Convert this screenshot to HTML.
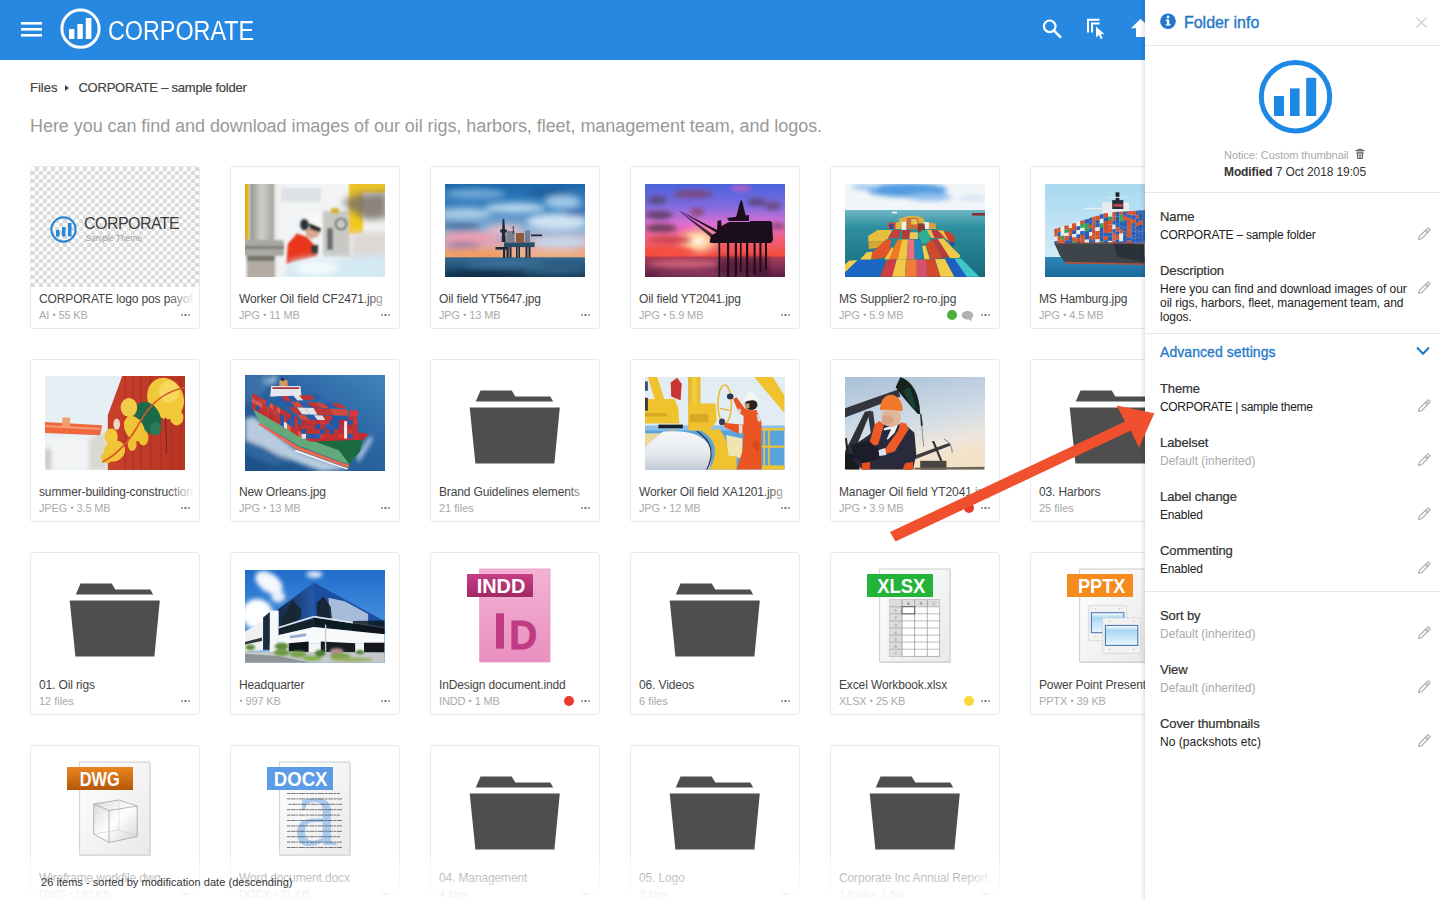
<!DOCTYPE html>
<html lang="en">
<head>
<meta charset="utf-8">
<title>CORPORATE – sample folder</title>
<style>
*{box-sizing:border-box;margin:0;padding:0}
html,body{width:1440px;height:900px;overflow:hidden;background:#fff}
body{font-family:"Liberation Sans",sans-serif;color:#333;position:relative;-webkit-font-smoothing:antialiased}
.abs{position:absolute}
#hdr{position:absolute;left:0;top:0;width:1440px;height:59.5px;background:#2688e0}
#brand{position:absolute;left:108px;top:14.5px;font-size:27px;line-height:32px;color:#fff;letter-spacing:0;white-space:nowrap;transform-origin:0 50%;transform:scaleX(0.864)}
#crumb{position:absolute;left:30px;top:80px;font-size:13px;line-height:16px;color:#444;-webkit-text-stroke:0.2px #444;white-space:nowrap}
#crumb .sep{display:inline-block;width:0;height:0;border-left:4px solid #444;border-top:3px solid transparent;border-bottom:3px solid transparent;margin:0 9px 2px 8px;vertical-align:middle}
#desc{position:absolute;left:30px;top:114px;font-size:18px;line-height:24px;color:#9a9a9a;white-space:nowrap;letter-spacing:-0.055px}
.card{position:absolute;width:170px;height:163px;border:1px solid #e9e9e9;border-radius:3px;background:#fff;overflow:hidden}
.card .th{position:absolute;left:14px;top:17px;width:140px;height:93px;overflow:hidden}
.card .th svg{display:block}
.card .ti{position:absolute;left:8px;top:124px;width:158px;font-size:12px;line-height:16px;color:#444;white-space:nowrap;overflow:hidden;letter-spacing:-0.13px}
.card .ti i{font-style:normal;color:#999}
.card .ti:after{content:"";position:absolute;right:0;top:0;width:30px;height:16px;background:linear-gradient(90deg,rgba(255,255,255,0),#fff 92%)}
.card .me{position:absolute;left:8px;top:141px;font-size:11px;line-height:14px;color:#aaa;white-space:nowrap;letter-spacing:-0.15px}
.card .me .bu{font-size:8.5px;vertical-align:1px;margin:0 .4px}
.card .dots{position:absolute;left:150px;top:147px;width:10px;height:3px}
.card .dots b{position:absolute;top:0;width:2.4px;height:2.4px;border-radius:50%;background:#8a8a8a}
.card .lab{position:absolute;top:143px;width:10px;height:10px;border-radius:50%}
#panel{position:absolute;left:1145px;top:0;width:295px;height:900px;background:#fff;box-shadow:-1px 0 5px rgba(0,0,0,0.16)}
#panel .hl{position:absolute;left:0;width:295px;height:1px;background:#e8e8e8}
#panel .lb{position:absolute;left:15px;font-size:13px;line-height:16px;color:#333;-webkit-text-stroke:0.22px #333;white-space:nowrap;letter-spacing:-0.1px}
#panel .vl{position:absolute;left:15px;font-size:12px;line-height:14px;color:#222;white-space:nowrap;letter-spacing:-0.2px}
#panel .vl.g{color:#aaa}
#panel .pen{position:absolute;left:272px;width:14px;height:14px}
#fade{position:absolute;left:0;top:852px;width:1145px;height:48px;background:linear-gradient(180deg,rgba(255,255,255,0),rgba(255,255,255,0.56) 35%,rgba(255,255,255,0.72) 65%,rgba(255,255,255,0.9))}
#status{position:absolute;left:41px;top:875px;font-size:11px;line-height:14px;color:#333;white-space:nowrap;letter-spacing:0.04px}
</style>
</head>
<body>
<div id="hdr">
  <svg class="abs" style="left:20px;top:21px" width="23" height="17" viewBox="0 0 23 17"><rect x="1" y="1" width="21" height="2.6" fill="#fff"/><rect x="1" y="7" width="21" height="2.6" fill="#fff"/><rect x="1" y="13" width="21" height="2.6" fill="#fff"/></svg>
  <svg class="abs" style="left:59px;top:7px" width="44" height="44" viewBox="0 0 44 44"><circle cx="21.5" cy="21.7" r="18.6" fill="none" stroke="#fff" stroke-width="3"/><rect x="10" y="22" width="5.4" height="10" fill="#fff"/><rect x="18.4" y="17" width="5.4" height="15" fill="#fff"/><rect x="26.8" y="11" width="5.6" height="21" fill="#fff"/></svg>
  <div id="brand">CORPORATE</div>
  <svg class="abs" style="left:1038px;top:15px" width="28" height="28" viewBox="0 0 28 28"><circle cx="11.7" cy="11.3" r="5.8" fill="none" stroke="#fff" stroke-width="2.2"/><path d="M16 15.6 L22.2 21.8" stroke="#fff" stroke-width="2.6" stroke-linecap="round"/></svg>
  <svg class="abs" style="left:1084px;top:15px" width="26" height="28" viewBox="0 0 26 28"><path d="M4 17.5 V4.8 H15.5" fill="none" stroke="#fff" stroke-width="2"/><path d="M8 17.5 V8.6 H15.5" fill="none" stroke="#fff" stroke-width="2"/><path d="M12 11.5 L12 22.5 L14.8 20 L16.8 24 L18.6 23.1 L16.7 19.2 L20.3 19 Z" fill="#fff"/></svg>
  <svg class="abs" style="left:1128px;top:15px" width="34" height="28" viewBox="0 0 34 28"><path d="M12.6 3.7 L3 13.2 H8 V22 H17.2 V13.2 H22.2 Z" fill="#fff"/></svg>
</div>
<div id="crumb">Files<span class="sep"></span><span style="letter-spacing:-0.23px">CORPORATE – sample folder</span></div>
<div id="desc">Here you can find and download images of our oil rigs, harbors, fleet, management team, and logos.</div>
<div id="cards">
<div class="card" style="left:30px;top:166px"><div class="abs" style="left:0;top:0;width:168px;height:120px;background-color:#fff;background-image:linear-gradient(45deg,#d9d9d9 25%,transparent 25%,transparent 75%,#d9d9d9 75%),linear-gradient(45deg,#d9d9d9 25%,transparent 25%,transparent 75%,#d9d9d9 75%);background-size:8px 8px;background-position:0 0,4px 4px"></div>
<svg class="abs" style="left:17px;top:47px" width="32" height="32" viewBox="0 0 32 32"><circle cx="15.5" cy="15.5" r="12.1" fill="none" stroke="#2a88d8" stroke-width="2.2"/><rect x="8" y="16" width="3.5" height="6.5" fill="#2a88d8"/><rect x="14" y="13" width="3.5" height="9.5" fill="#2a88d8"/><rect x="20" y="9" width="3.5" height="13.5" fill="#2a88d8"/></svg>
<div class="abs" style="left:53px;top:48px;font-size:16px;line-height:18px;color:#3a3a3a;letter-spacing:-0.55px;white-space:nowrap">CORPORATE</div>
<div class="abs" style="left:54.5px;top:66px;font-size:8.5px;line-height:10px;color:#a4a4a4;white-space:nowrap;letter-spacing:-0.1px">Sample Theme</div><div class="ti">CORPORATE logo pos payoff.ai</div><div class="me">AI <span class="bu">•</span> 55 KB</div><div class="dots"><b style="left:0"></b><b style="left:3.4px"></b><b style="left:6.8px"></b></div></div>
<div class="card" style="left:230px;top:166px"><div class="th" style="top:17px;height:93px"><svg width="140" height="93" viewBox="0 0 140 93"><defs><filter id="b1" x="-10%" y="-10%" width="120%" height="120%"><feGaussianBlur stdDeviation="1.1"/></filter><filter id="b1b" x="-20%" y="-20%" width="140%" height="140%"><feGaussianBlur stdDeviation="3.5"/></filter><linearGradient id="w1p" x1="0" x2="1"><stop offset="0" stop-color="#8f8f8c"/><stop offset=".45" stop-color="#cfcfcc"/><stop offset="1" stop-color="#a3a29e"/></linearGradient></defs>
<rect width="140" height="93" fill="#f1f3f4"/>
<g filter="url(#b1)">
<rect x="36" y="4" width="40" height="14" fill="#dfe3e6"/>
<rect x="-2" y="-2" width="6" height="58" fill="#dcae1c"/>
<rect x="5" y="-2" width="24.5" height="97" fill="url(#w1p)"/>
<rect x="29.5" y="-2" width="3" height="97" fill="#e9e9e6"/>
<rect x="-2" y="56" width="41" height="16" rx="3" fill="#a9a8a3"/>
<rect x="-2" y="62" width="41" height="3" fill="#7f7e7a"/>
<rect x="2" y="72" width="28" height="23" fill="#b3aca4"/>
<rect x="2" y="72" width="28" height="5" fill="#75726c"/>
<rect x="78" y="27" width="27" height="46" fill="#c9c9c4"/>
<rect x="82" y="44" width="6" height="22" fill="#6d6f70"/>
<circle cx="96" cy="40" r="5.5" fill="none" stroke="#55585a" stroke-width="1.6"/>
<rect x="86" y="24" width="8" height="6" fill="#d8b63a"/>
<rect x="104" y="-2" width="14" height="52" fill="#f2c81c"/>
<rect x="104" y="-2" width="38" height="11" fill="#ecc325"/>
<path d="M41.5 80 L42.8 60 L52 49.5 L62 53 L70.5 62.5 L72 72 Z" fill="#e8361b"/>
<path d="M61 44 L73 44 L74 52 L66 55 L61 52Z" fill="#d9a78c"/>
<path d="M56 41 Q57 27 68 28 Q76 31 77 43 L70 40 L62 37 Z" fill="#f7f7f5"/>
<ellipse cx="59.5" cy="40.5" rx="4.3" ry="6" fill="#2c3340"/>
<path d="M64 39 L76 44 L75 48.5 L65 45 Z" fill="#25272c"/>
<rect x="66" y="61" width="7" height="9" fill="#3a3530"/>
</g>
<g filter="url(#b1b)">
<path d="M97 18 L112 10 L142 8 L142 34 L122 36 L108 28 Z" fill="#7a7068" opacity=".85"/>
<rect x="106" y="48" width="40" height="50" fill="#dcd8d4"/>
<path d="M38 98 L44 78 Q70 70 104 74 L140 70 L146 98 Z" fill="#d3e9f4"/>
<ellipse cx="72" cy="84" rx="22" ry="7" fill="#f4fafd"/>
</g></svg></div><div class="ti">Worker Oil field CF2471.jpg</div><div class="me">JPG <span class="bu">•</span> 11 MB</div><div class="dots"><b style="left:0"></b><b style="left:3.4px"></b><b style="left:6.8px"></b></div></div>
<div class="card" style="left:430px;top:166px"><div class="th" style="top:17px;height:93px"><svg width="140" height="93" viewBox="0 0 140 93"><defs><filter id="b2" x="-20%" y="-20%" width="140%" height="140%"><feGaussianBlur stdDeviation="3"/></filter><filter id="b2s" x="-10%" y="-10%" width="120%" height="120%"><feGaussianBlur stdDeviation=".5"/></filter><linearGradient id="r1s" x1="0" y1="0" x2="0" y2="1"><stop offset="0" stop-color="#1c68ab"/><stop offset=".35" stop-color="#3f86c2"/><stop offset=".62" stop-color="#8fb4d6"/><stop offset=".8" stop-color="#d9a9b6"/><stop offset="1" stop-color="#f0a468"/></linearGradient><linearGradient id="r1w" x1="0" y1="0" x2="0" y2="1"><stop offset="0" stop-color="#35678f"/><stop offset=".5" stop-color="#25557a"/><stop offset="1" stop-color="#163a56"/></linearGradient></defs>
<rect width="140" height="74" fill="url(#r1s)"/>
<g filter="url(#b2)">
<ellipse cx="30" cy="10" rx="30" ry="5" fill="#6fa9d6"/>
<ellipse cx="20" cy="30" rx="26" ry="6" fill="#a9cbe6"/>
<ellipse cx="70" cy="24" rx="30" ry="5" fill="#bcd8ee"/>
<ellipse cx="118" cy="18" rx="18" ry="7" fill="#9cc6e8"/>
<ellipse cx="112" cy="38" rx="30" ry="8" fill="#cfe2f2"/>
<ellipse cx="104" cy="8" rx="22" ry="4" fill="#1a5c9c"/>
<ellipse cx="130" cy="28" rx="12" ry="4" fill="#2a6eb0"/>
<ellipse cx="16" cy="42" rx="20" ry="5" fill="#4a78a8"/>
<ellipse cx="25" cy="54" rx="28" ry="6" fill="#ec9fb0"/>
<ellipse cx="60" cy="46" rx="18" ry="5" fill="#e8b8c8"/>
<ellipse cx="18" cy="61" rx="18" ry="3" fill="#8a7aa0"/>
<ellipse cx="30" cy="70" rx="34" ry="3.5" fill="#f59a5c"/>
<ellipse cx="115" cy="58" rx="28" ry="6" fill="#c8d8ea"/>
<ellipse cx="100" cy="69" rx="40" ry="3" fill="#efb89a"/>
</g>
<rect y="73.3" width="140" height="20" fill="url(#r1w)"/>
<g filter="url(#b2)"><ellipse cx="60" cy="80" rx="40" ry="3" fill="#4a82ac" opacity=".7"/><ellipse cx="40" cy="91" rx="40" ry="4" fill="#0f2c44"/><ellipse cx="110" cy="86" rx="30" ry="3" fill="#3a7098" opacity=".7"/></g>
<g filter="url(#b2s)" fill="#1d2b3a">
<rect x="59" y="58.3" width="30.6" height="4.8" fill="#27506b"/>
<rect x="58" y="62.8" width="2.2" height="11"/><rect x="61.5" y="62.8" width="2.2" height="11"/><rect x="64.5" y="62.8" width="2" height="11"/>
<rect x="71" y="62.8" width="1.6" height="11"/><rect x="73.4" y="62.8" width="1.6" height="11"/>
<rect x="80.5" y="62.8" width="2" height="11"/><rect x="83.5" y="62.8" width="2" height="11"/>
<rect x="50.5" y="63" width="11.5" height="2.6"/>
<path d="M56.6 58 L57.6 36 L58.4 34.4 L59.4 36 L60.8 58 Z"/>
<rect x="55.3" y="45.5" width="6.6" height="3"/>
<rect x="86" y="50.5" width="11" height="1.7"/>
<rect x="61.5" y="47" width="8" height="11.5" fill="#7a7f8c"/>
<rect x="71" y="49" width="8" height="9.5" fill="#8a5a3c"/>
<rect x="80" y="46.5" width="5" height="12" fill="#6c8096"/>
<rect x="67.8" y="42" width=".9" height="8"/>
</g></svg></div><div class="ti">Oil field YT5647.jpg</div><div class="me">JPG <span class="bu">•</span> 13 MB</div><div class="dots"><b style="left:0"></b><b style="left:3.4px"></b><b style="left:6.8px"></b></div></div>
<div class="card" style="left:630px;top:166px"><div class="th" style="top:17px;height:93px"><svg width="140" height="93" viewBox="0 0 140 93"><defs><filter id="b3" x="-20%" y="-20%" width="140%" height="140%"><feGaussianBlur stdDeviation="2.6"/></filter><filter id="b3s" x="-10%" y="-10%" width="120%" height="120%"><feGaussianBlur stdDeviation=".5"/></filter><linearGradient id="r2s" x1="0" y1="0" x2="0" y2="1"><stop offset="0" stop-color="#4a63dc"/><stop offset=".3" stop-color="#7f6be0"/><stop offset=".55" stop-color="#e06fd2"/><stop offset=".75" stop-color="#f0607a"/><stop offset="1" stop-color="#f24a38"/></linearGradient><linearGradient id="r2w" x1="0" y1="0" x2="0" y2="1"><stop offset="0" stop-color="#b03c50"/><stop offset=".4" stop-color="#8a3258"/><stop offset="1" stop-color="#571c40"/></linearGradient><radialGradient id="r2sun" cx=".5" cy=".5" r=".5"><stop offset="0" stop-color="#fffbe8"/><stop offset=".4" stop-color="#ffd8a8" stop-opacity=".9"/><stop offset="1" stop-color="#ff9a80" stop-opacity="0"/></radialGradient></defs>
<rect width="140" height="73" fill="url(#r2s)"/>
<ellipse cx="53" cy="57" rx="26" ry="17" fill="url(#r2sun)"/>
<g filter="url(#b3)">
<ellipse cx="12" cy="16" rx="10" ry="4" fill="#5a4a78"/>
<ellipse cx="48" cy="10" rx="20" ry="4" fill="#7a4a80"/>
<ellipse cx="14" cy="31" rx="14" ry="4" fill="#5e3f66"/>
<ellipse cx="16" cy="44" rx="16" ry="4" fill="#6a3c5c"/>
<ellipse cx="52" cy="28" rx="7" ry="4" fill="#8a4a78"/>
<ellipse cx="112" cy="18" rx="10" ry="4" fill="#5e4a80"/>
<ellipse cx="96" cy="4" rx="10" ry="2.5" fill="#d060c0"/>
<ellipse cx="25" cy="56" rx="22" ry="3" fill="#c8404a"/>
<ellipse cx="128" cy="22" rx="8" ry="4" fill="#6a4a80"/>
<ellipse cx="133" cy="42" rx="8" ry="2.5" fill="#7a4068"/>
<ellipse cx="20" cy="68" rx="30" ry="4" fill="#f4503c"/>
</g>
<rect y="72.6" width="140" height="21" fill="url(#r2w)"/>
<g filter="url(#b3)"><ellipse cx="40" cy="80" rx="36" ry="4" fill="#d86a80" opacity=".8"/><ellipse cx="60" cy="90" rx="50" ry="3" fill="#a04868" opacity=".7"/></g>
<g filter="url(#b3s)" fill="#1c0f1a" stroke="none">
<path d="M64.5 58 L66 52 L72 48 L72.5 37 L76 36 L76.5 42 L84 38 L127 38 L128 56 L126 59 L66 59 Z"/>
<path d="M32.5 25.6 L73 49.5 L73 46.5 Z"/>
<path d="M33 26 L68 55 L70 52 Z" opacity=".8"/>
<path d="M90 37 L95.5 16.5 L97 16.5 L102 37 Z"/>
<path d="M82 34 L104 31 L104 37 L84 37Z"/>
<rect x="105" y="37" width="21" height="4"/>
<g><rect x="73.5" y="58" width="1.7" height="35"/><rect x="82" y="58" width="2.2" height="35"/><rect x="89.8" y="58" width="2.2" height="35"/><rect x="95" y="58" width="1.6" height="30"/><rect x="101" y="58" width="2.2" height="35"/><rect x="108.6" y="58" width="2" height="32"/><rect x="114.4" y="58" width="2" height="30"/><rect x="120" y="58" width="2" height="28"/></g>
</g>
<rect x="74" y="73" width="50" height="20" fill="#2a1026" opacity=".45" filter="url(#b3)"/>
</svg></div><div class="ti">Oil field YT2041.jpg</div><div class="me">JPG <span class="bu">•</span> 5.9 MB</div><div class="dots"><b style="left:0"></b><b style="left:3.4px"></b><b style="left:6.8px"></b></div></div>
<div class="card" style="left:830px;top:166px"><div class="th" style="top:17px;height:93px"><svg width="140" height="93" viewBox="0 0 140 93"><defs><filter id="b4" x="-20%" y="-20%" width="140%" height="140%"><feGaussianBlur stdDeviation="2.5"/></filter><filter id="b4s" x="-5%" y="-5%" width="110%" height="110%"><feGaussianBlur stdDeviation=".45"/></filter><linearGradient id="s1w" x1="0" y1="0" x2="0" y2="1"><stop offset="0" stop-color="#6fb7c6"/><stop offset=".25" stop-color="#2f909f"/><stop offset="1" stop-color="#176a7c"/></linearGradient></defs>
<rect width="140" height="27" fill="#f3f6f9"/>
<g filter="url(#b4)"><ellipse cx="62" cy="6" rx="40" ry="7" fill="#4f9be0"/><ellipse cx="85" cy="13" rx="22" ry="4" fill="#8fc0ec"/><ellipse cx="20" cy="3" rx="14" ry="3" fill="#9cc8ee"/><ellipse cx="128" cy="14" rx="14" ry="3" fill="#d4e4f2"/></g>
<rect y="26" width="140" height="67" fill="url(#s1w)"/>
<rect x="127" y="29" width="13" height="2.6" fill="#8a3038"/><rect x="47" y="27.5" width="5" height="2" fill="#e8e8e8"/>
<g filter="url(#b4s)">
<polygon points="53.9,34.4 63.9,31.7 72.8,31.7 79.4,35.0 79.4,45.0 53.9,45.0" fill="#d8b048"/><polygon points="42.8,38.9 50.6,38.1 50.6,45.0 42.8,45.0" fill="#c84a3a"/><polygon points="44.4,40.0 48.3,40.0 48.3,45.0 44.4,45.0" fill="#3a4a8a"/><polygon points="50.6,38.3 57.2,37.8 57.2,45.0 50.6,45.0" fill="#e0b840"/><polygon points="56.7,37.8 61.1,37.8 61.1,46.1 56.7,46.1" fill="#f0f0ee"/><polygon points="61.7,33.9 72.8,33.9 75.0,45.0 61.7,45.0" fill="#c86a3a"/><polygon points="66.1,35.0 71.7,35.0 72.8,40.6 66.1,40.6" fill="#e8c050"/><polygon points="78.3,38.1 83.9,38.1 85.0,45.0 78.3,45.0" fill="#ececea"/><polygon points="83.9,38.3 90.6,39.4 91.1,45.0 83.9,45.0" fill="#d8a040"/><polygon points="72.8,39.4 79.4,39.4 80.6,48.3 72.8,48.3" fill="#8a3a30"/><polygon points="23.3,51.7 32.8,46.1 47.2,46.1 41.7,57.2 23.3,57.2" fill="#e6bf3e"/><polygon points="42.8,53.9 48.3,46.1 56.1,46.1 53.9,53.9" fill="#c4403a"/><polygon points="57.2,46.1 66.1,46.1 63.9,55.0 57.2,55.0" fill="#b03a30"/><polygon points="65.0,48.3 72.8,48.3 72.8,55.0 64.4,55.0" fill="#e8c860"/><polygon points="72.8,50.6 77.2,46.1 83.9,46.1 85.0,58.3 77.2,59.4" fill="#2fae92"/><polygon points="81.7,46.1 87.2,46.1 90.6,53.9 86.1,53.9" fill="#e8c050"/><polygon points="86.1,46.1 95.0,46.1 101.7,53.9 89.4,53.9" fill="#b83c40"/><polygon points="92.8,46.1 99.4,46.7 106.1,55.0 101.7,56.1" fill="#e6c040"/><polygon points="98.3,46.7 105.0,48.3 110.0,52.8 109.4,58.3 104.4,58.3" fill="#c44036"/><polygon points="23.3,57.2 41.7,57.2 39.4,62.8 23.9,65.0" fill="#d4a830"/><polygon points="104.4,58.3 109.4,58.3 108.9,62.8 106.1,61.7" fill="#2a4a9a"/><polygon points="27.2,68.3 41.7,55.0 46.1,56.1 43.9,72.8 26.7,75.6" fill="#e2522c"/><polygon points="43.9,72.8 52.8,55.6 57.2,55.6 55.0,75.6 43.9,75.6" fill="#ee7a28"/><polygon points="52.8,75.6 57.2,55.6 63.0,55.6 61.7,75.6" fill="#f0c63c"/><polygon points="61.7,75.6 63.0,55.6 69.2,55.6 69.7,75.6" fill="#e8707a"/><polygon points="69.7,75.6 69.2,55.6 75.0,55.6 78.3,73.9" fill="#2186b8"/><polygon points="77.2,61.7 80.6,61.7 85.0,75.6 79.4,75.6" fill="#f2cf44"/><polygon points="80.6,60.6 87.2,55.6 97.2,73.9 86.1,75.6" fill="#d2482c"/><polygon points="87.2,55.6 93.9,55.0 105.0,72.8 97.2,73.9" fill="#b83a40"/><polygon points="92.8,55.0 98.3,54.4 115.6,71.7 113.9,73.9 105.0,73.9" fill="#f0c84a"/><polygon points="15.0,75.6 21.7,68.3 27.2,67.8 26.1,75.6" fill="#f0cc48"/><polygon points="39.4,75.6 47.2,62.8 48.3,65.0 43.9,75.6" fill="#f0c63c"/><polygon points="0.0,80.6 3.9,76.7 12.8,76.1 1.7,88.3 0.0,88.3" fill="#f2ce4c"/><polygon points="0.0,92.8 0.0,88.3 12.8,76.1 40.6,76.1 33.9,92.8" fill="#1f66c4"/><polygon points="35.0,92.8 41.7,76.1 51.1,75.6 48.3,92.8" fill="#cc3c44"/><polygon points="47.2,92.8 51.7,75.6 61.1,75.6 60.0,92.8" fill="#f4c84a"/><polygon points="60.0,92.8 61.4,75.6 71.7,75.6 71.9,92.8" fill="#f07c34"/><polygon points="71.9,92.8 71.7,75.6 80.6,75.6 83.0,92.8" fill="#d8506a"/><polygon points="83.0,92.8 80.6,75.6 89.4,75.2 95.6,92.8" fill="#d4482e"/><polygon points="95.6,92.8 90.0,75.2 100.0,75.0 109.4,92.8" fill="#f4cc48"/><polygon points="109.4,92.8 100.0,75.0 109.4,74.8 121.7,92.8" fill="#1a5ec0"/><polygon points="121.7,92.8 109.4,74.8 116.1,74.4 134.4,92.8" fill="#3ec6cc"/></g></svg></div><div class="ti">MS Supplier2 ro-ro.jpg</div><div class="me">JPG <span class="bu">•</span> 5.9 MB</div><div class="lab" style="left:116px;background:#4caf3c"></div><svg class="abs" style="left:129.5px;top:142.5px" width="13" height="12" viewBox="0 0 13 12"><path d="M6.5 1 C3.2 1 .8 2.9 .8 5.3 C.8 7.7 3.2 9.6 6.5 9.6 C7 9.6 7.4 9.55 7.8 9.5 L10.8 11.3 L10.3 8.6 C11.5 7.8 12.2 6.6 12.2 5.3 C12.2 2.9 9.8 1 6.5 1Z" fill="#b0b0b0"/></svg><div class="dots"><b style="left:0"></b><b style="left:3.4px"></b><b style="left:6.8px"></b></div></div>
<div class="card" style="left:1030px;top:166px"><div class="th" style="top:17px;height:93px"><svg width="140" height="93" viewBox="0 0 140 93"><defs><filter id="b5s" x="-5%" y="-5%" width="110%" height="110%"><feGaussianBlur stdDeviation=".4"/></filter><linearGradient id="s2w" x1="0" y1="0" x2="0" y2="1"><stop offset="0" stop-color="#2f86b8"/><stop offset="1" stop-color="#1a6a9c"/></linearGradient><linearGradient id="s2s" x1="0" y1="0" x2="0" y2="1"><stop offset="0" stop-color="#a9d9f1"/><stop offset="1" stop-color="#d3ebf6"/></linearGradient></defs>
<rect width="140" height="74" fill="url(#s2s)"/><rect y="73" width="140" height="20" fill="url(#s2w)"/>
<g filter="url(#b5s)">
<polygon points="57.2,18.3 83.9,18.3 83.9,29.4 57.2,29.4" fill="#e8ecee"/><polygon points="67.2,16.1 78.3,16.1 78.3,25.0 67.2,25.0" fill="#27303c"/><polygon points="68.3,20.0 77.8,20.0 77.8,22.8 68.3,22.8" fill="#c8404a"/><polygon points="70.6,8.3 74.4,8.3 74.4,16.7 70.6,16.7" fill="#1e242c"/><polygon points="62.8,12.8 81.7,12.8 81.7,13.9 62.8,13.9" fill="#e0e4e6"/><polygon points="39.4,23.9 57.2,23.9 57.2,25.2 39.4,25.2" fill="#eef0f0"/><polygon points="9.4,45.0 12.6,44.6 12.6,49.4 9.4,49.4" fill="#cf4a2a"/><polygon points="9.4,49.4 12.6,49.0 12.6,52.8 9.4,52.8" fill="#d05a30"/><polygon points="9.4,52.8 12.6,52.3 12.6,57.2 9.4,57.2" fill="#e6e6e2"/><polygon points="9.4,57.2 12.6,56.8 12.6,59.4 9.4,59.4" fill="#2f62b8"/><polygon points="12.6,44.0 15.7,43.6 15.7,48.5 12.6,48.5" fill="#d8522c"/><polygon points="12.6,48.5 15.7,48.0 15.7,52.2 12.6,52.2" fill="#2a5cb4"/><polygon points="12.6,52.2 15.7,51.8 15.7,56.7 12.6,56.7" fill="#d8522c"/><polygon points="12.6,56.7 15.7,56.2 15.7,59.4 12.6,59.4" fill="#d8522c"/><polygon points="15.7,43.0 19.4,42.6 19.4,47.5 15.7,47.5" fill="#efefec"/><polygon points="15.7,47.5 19.4,47.0 19.4,51.9 15.7,51.9" fill="#e6e6e2"/><polygon points="15.7,51.9 19.4,51.5 19.4,55.7 15.7,55.7" fill="#3aa05a"/><polygon points="15.7,55.7 19.4,55.2 19.4,59.0 15.7,59.0" fill="#d8522c"/><polygon points="15.7,59.0 19.4,58.6 19.4,59.4 15.7,59.4" fill="#e8e8e4"/><polygon points="19.4,41.8 23.9,41.4 23.9,45.6 19.4,45.6" fill="#d8522c"/><polygon points="19.4,45.6 23.9,45.1 23.9,48.9 19.4,48.9" fill="#3aa05a"/><polygon points="19.4,48.9 23.9,48.5 23.9,52.3 19.4,52.3" fill="#e8e8e4"/><polygon points="19.4,52.3 23.9,51.8 23.9,56.7 19.4,56.7" fill="#d8522c"/><polygon points="19.4,56.7 23.9,56.3 23.9,59.4 19.4,59.4" fill="#2a5cb4"/><polygon points="23.9,40.4 27.0,39.9 27.0,44.2 23.9,44.2" fill="#e6e6e2"/><polygon points="23.9,44.2 27.0,43.7 27.0,48.6 23.9,48.6" fill="#d8522c"/><polygon points="23.9,48.6 27.0,48.2 27.0,52.4 23.9,52.4" fill="#d8522c"/><polygon points="23.9,52.4 27.0,51.9 27.0,56.2 23.9,56.2" fill="#2a5cb4"/><polygon points="23.9,56.2 27.0,55.7 27.0,59.4 23.9,59.4" fill="#2a5cb4"/><polygon points="27.0,39.4 31.4,39.0 31.4,43.2 27.0,43.2" fill="#d8522c"/><polygon points="27.0,43.2 31.4,42.7 31.4,46.5 27.0,46.5" fill="#d8522c"/><polygon points="27.0,46.5 31.4,46.1 31.4,50.3 27.0,50.3" fill="#2a5cb4"/><polygon points="27.0,50.3 31.4,49.8 31.4,53.6 27.0,53.6" fill="#e8e8e4"/><polygon points="27.0,53.6 31.4,53.2 31.4,57.4 27.0,57.4" fill="#d8522c"/><polygon points="27.0,57.4 31.4,57.0 31.4,59.4 27.0,59.4" fill="#3aa05a"/><polygon points="31.4,38.0 35.2,37.5 35.2,42.4 31.4,42.4" fill="#efefec"/><polygon points="31.4,42.4 35.2,42.0 35.2,46.2 31.4,46.2" fill="#2a5cb4"/><polygon points="31.4,46.2 35.2,45.8 35.2,50.6 31.4,50.6" fill="#efefec"/><polygon points="31.4,50.6 35.2,50.2 35.2,54.4 31.4,54.4" fill="#2f62b8"/><polygon points="31.4,54.4 35.2,54.0 35.2,58.2 31.4,58.2" fill="#cf4a2a"/><polygon points="31.4,58.2 35.2,57.8 35.2,59.4 31.4,59.4" fill="#2a5cb4"/><polygon points="35.2,36.8 39.7,36.3 39.7,40.1 35.2,40.1" fill="#d8522c"/><polygon points="35.2,40.1 39.7,39.7 39.7,43.9 35.2,43.9" fill="#3aa05a"/><polygon points="35.2,43.9 39.7,43.4 39.7,47.2 35.2,47.2" fill="#efefec"/><polygon points="35.2,47.2 39.7,46.8 39.7,51.0 35.2,51.0" fill="#2f62b8"/><polygon points="35.2,51.0 39.7,50.6 39.7,55.4 35.2,55.4" fill="#d8522c"/><polygon points="35.2,55.4 39.7,55.0 39.7,58.8 35.2,58.8" fill="#d8522c"/><polygon points="35.2,58.8 39.7,58.3 39.7,59.4 35.2,59.4" fill="#cf4a2a"/><polygon points="39.7,35.4 44.1,34.9 44.1,39.8 39.7,39.8" fill="#2a5cb4"/><polygon points="39.7,39.8 44.1,39.4 44.1,44.2 39.7,44.2" fill="#3aa05a"/><polygon points="39.7,44.2 44.1,43.8 44.1,47.6 39.7,47.6" fill="#3aa05a"/><polygon points="39.7,47.6 44.1,47.1 44.1,52.0 39.7,52.0" fill="#2a5cb4"/><polygon points="39.7,52.0 44.1,51.6 44.1,55.8 39.7,55.8" fill="#2a5cb4"/><polygon points="39.7,55.8 44.1,55.4 44.1,59.1 39.7,59.1" fill="#e6e6e2"/><polygon points="39.7,59.1 44.1,58.7 44.1,59.4 39.7,59.4" fill="#e6e6e2"/><polygon points="44.1,33.9 47.2,33.5 47.2,37.7 44.1,37.7" fill="#2a5cb4"/><polygon points="44.1,37.7 47.2,37.3 47.2,41.0 44.1,41.0" fill="#2a5cb4"/><polygon points="44.1,41.0 47.2,40.6 47.2,44.4 44.1,44.4" fill="#d8522c"/><polygon points="44.1,44.4 47.2,43.9 47.2,48.2 44.1,48.2" fill="#2a5cb4"/><polygon points="44.1,48.2 47.2,47.7 47.2,51.9 44.1,51.9" fill="#efefec"/><polygon points="44.1,51.9 47.2,51.5 47.2,55.3 44.1,55.3" fill="#d8522c"/><polygon points="44.1,55.3 47.2,54.8 47.2,59.4 44.1,59.4" fill="#2f62b8"/><polygon points="47.2,32.9 50.3,32.5 50.3,36.7 47.2,36.7" fill="#d8522c"/><polygon points="47.2,36.7 50.3,36.3 50.3,41.2 47.2,41.2" fill="#d05a30"/><polygon points="47.2,41.2 50.3,40.7 50.3,45.6 47.2,45.6" fill="#d8522c"/><polygon points="47.2,45.6 50.3,45.2 50.3,49.4 47.2,49.4" fill="#cf4a2a"/><polygon points="47.2,49.4 50.3,48.9 50.3,52.7 47.2,52.7" fill="#d8522c"/><polygon points="47.2,52.7 50.3,52.3 50.3,56.5 47.2,56.5" fill="#d8522c"/><polygon points="47.2,56.5 50.3,56.1 50.3,59.4 47.2,59.4" fill="#2a5cb4"/><polygon points="50.3,32.0 54.8,31.5 54.8,36.4 50.3,36.4" fill="#d8522c"/><polygon points="50.3,36.4 54.8,36.0 54.8,39.7 50.3,39.7" fill="#2a5cb4"/><polygon points="50.3,39.7 54.8,39.3 54.8,43.5 50.3,43.5" fill="#2f62b8"/><polygon points="50.3,43.5 54.8,43.1 54.8,47.3 50.3,47.3" fill="#e8e8e4"/><polygon points="50.3,47.3 54.8,46.8 54.8,51.7 50.3,51.7" fill="#d8522c"/><polygon points="50.3,51.7 54.8,51.3 54.8,55.5 50.3,55.5" fill="#d05a30"/><polygon points="50.3,55.5 54.8,55.1 54.8,59.3 50.3,59.3" fill="#e8e8e4"/><polygon points="50.3,59.3 54.8,58.8 54.8,59.4 50.3,59.4" fill="#2a5cb4"/><polygon points="54.8,30.5 58.6,30.1 58.6,35.0 54.8,35.0" fill="#2a5cb4"/><polygon points="54.8,35.0 58.6,34.5 58.6,39.4 54.8,39.4" fill="#efefec"/><polygon points="54.8,39.4 58.6,39.0 58.6,43.9 54.8,43.9" fill="#3aa05a"/><polygon points="54.8,43.9 58.6,43.4 58.6,48.3 54.8,48.3" fill="#2a5cb4"/><polygon points="54.8,48.3 58.6,47.9 58.6,52.8 54.8,52.8" fill="#2a5cb4"/><polygon points="54.8,52.8 58.6,52.3 58.6,57.2 54.8,57.2" fill="#2a5cb4"/><polygon points="54.8,57.2 58.6,56.8 58.6,59.4 54.8,59.4" fill="#3aa05a"/><polygon points="58.6,29.3 63.0,28.9 63.0,33.8 58.6,33.8" fill="#d8522c"/><polygon points="58.6,33.8 63.0,33.3 63.0,37.5 58.6,37.5" fill="#2a5cb4"/><polygon points="58.6,37.5 63.0,37.1 63.0,41.3 58.6,41.3" fill="#cf4a2a"/><polygon points="58.6,41.3 63.0,40.9 63.0,45.1 58.6,45.1" fill="#cf4a2a"/><polygon points="58.6,45.1 63.0,44.7 63.0,48.9 58.6,48.9" fill="#d8522c"/><polygon points="58.6,48.9 63.0,48.4 63.0,52.7 58.6,52.7" fill="#2f62b8"/><polygon points="58.6,52.7 63.0,52.2 63.0,56.4 58.6,56.4" fill="#d8522c"/><polygon points="58.6,56.4 63.0,56.0 63.0,59.4 58.6,59.4" fill="#2f62b8"/><polygon points="63.0,28.3 67.4,28.3 67.4,32.7 63.0,32.7" fill="#e8e8e4"/><polygon points="63.0,32.7 67.4,32.7 67.4,36.0 63.0,36.0" fill="#3aa05a"/><polygon points="63.0,36.0 67.4,36.0 67.4,40.5 63.0,40.5" fill="#d05a30"/><polygon points="63.0,40.5 67.4,40.5 67.4,44.3 63.0,44.3" fill="#d05a30"/><polygon points="63.0,44.3 67.4,44.3 67.4,48.7 63.0,48.7" fill="#d8522c"/><polygon points="63.0,48.7 67.4,48.7 67.4,52.5 63.0,52.5" fill="#2f62b8"/><polygon points="63.0,52.5 67.4,52.5 67.4,56.9 63.0,56.9" fill="#2a5cb4"/><polygon points="63.0,56.9 67.4,56.9 67.4,59.4 63.0,59.4" fill="#e6e6e2"/><polygon points="67.4,28.0 70.6,28.0 70.6,32.4 67.4,32.4" fill="#d8522c"/><polygon points="67.4,32.4 70.6,32.4 70.6,36.9 67.4,36.9" fill="#d8522c"/><polygon points="67.4,36.9 70.6,36.9 70.6,40.7 67.4,40.7" fill="#2a5cb4"/><polygon points="67.4,40.7 70.6,40.7 70.6,45.1 67.4,45.1" fill="#e6e6e2"/><polygon points="67.4,45.1 70.6,45.1 70.6,48.9 67.4,48.9" fill="#2f62b8"/><polygon points="67.4,48.9 70.6,48.9 70.6,53.3 67.4,53.3" fill="#d05a30"/><polygon points="67.4,53.3 70.6,53.3 70.6,56.7 67.4,56.7" fill="#d05a30"/><polygon points="67.4,56.7 70.6,56.7 70.6,59.4 67.4,59.4" fill="#d05a30"/><polygon points="70.6,27.8 74.3,27.8 74.3,32.3 70.6,32.3" fill="#2a5cb4"/><polygon points="70.6,32.3 74.3,32.3 74.3,36.0 70.6,36.0" fill="#2a5cb4"/><polygon points="70.6,36.0 74.3,36.0 74.3,39.8 70.6,39.8" fill="#2a5cb4"/><polygon points="70.6,39.8 74.3,39.8 74.3,43.1 70.6,43.1" fill="#2f62b8"/><polygon points="70.6,43.1 74.3,43.1 74.3,47.6 70.6,47.6" fill="#d8522c"/><polygon points="70.6,47.6 74.3,47.6 74.3,50.9 70.6,50.9" fill="#2a5cb4"/><polygon points="70.6,50.9 74.3,50.9 74.3,55.4 70.6,55.4" fill="#d8522c"/><polygon points="70.6,55.4 74.3,55.4 74.3,59.4 70.6,59.4" fill="#2a5cb4"/><polygon points="74.3,27.6 78.1,27.6 78.1,30.9 74.3,30.9" fill="#d05a30"/><polygon points="74.3,30.9 78.1,30.9 78.1,34.3 74.3,34.3" fill="#3aa05a"/><polygon points="74.3,34.3 78.1,34.3 78.1,38.0 74.3,38.0" fill="#3aa05a"/><polygon points="74.3,38.0 78.1,38.0 78.1,42.5 74.3,42.5" fill="#2a5cb4"/><polygon points="74.3,42.5 78.1,42.5 78.1,45.8 74.3,45.8" fill="#2f62b8"/><polygon points="74.3,45.8 78.1,45.8 78.1,49.6 74.3,49.6" fill="#d05a30"/><polygon points="74.3,49.6 78.1,49.6 78.1,54.0 74.3,54.0" fill="#efefec"/><polygon points="74.3,54.0 78.1,54.0 78.1,57.4 74.3,57.4" fill="#e6e6e2"/><polygon points="74.3,57.4 78.1,57.4 78.1,59.4 74.3,59.4" fill="#2a5cb4"/><polygon points="78.1,27.4 81.9,27.4 81.9,31.8 78.1,31.8" fill="#2a5cb4"/><polygon points="78.1,31.8 81.9,31.8 81.9,36.3 78.1,36.3" fill="#d8522c"/><polygon points="78.1,36.3 81.9,36.3 81.9,40.0 78.1,40.0" fill="#2a5cb4"/><polygon points="78.1,40.0 81.9,40.0 81.9,43.4 78.1,43.4" fill="#2a5cb4"/><polygon points="78.1,43.4 81.9,43.4 81.9,47.8 78.1,47.8" fill="#2a5cb4"/><polygon points="78.1,47.8 81.9,47.8 81.9,51.6 78.1,51.6" fill="#3a62b0"/><polygon points="78.1,51.6 81.9,51.6 81.9,54.9 78.1,54.9" fill="#2856a8"/><polygon points="78.1,54.9 81.9,54.9 81.9,58.7 78.1,58.7" fill="#2a5cb4"/><polygon points="78.1,58.7 81.9,58.7 81.9,59.4 78.1,59.4" fill="#2856a8"/><polygon points="81.9,27.1 86.3,27.1 86.3,30.5 81.9,30.5" fill="#d8522c"/><polygon points="81.9,30.5 86.3,30.5 86.3,34.3 81.9,34.3" fill="#3a62b0"/><polygon points="81.9,34.3 86.3,34.3 86.3,38.0 81.9,38.0" fill="#d8522c"/><polygon points="81.9,38.0 86.3,38.0 86.3,41.8 81.9,41.8" fill="#d8522c"/><polygon points="81.9,41.8 86.3,41.8 86.3,45.6 81.9,45.6" fill="#d8522c"/><polygon points="81.9,45.6 86.3,45.6 86.3,50.0 81.9,50.0" fill="#d8522c"/><polygon points="81.9,50.0 86.3,50.0 86.3,53.4 81.9,53.4" fill="#d8522c"/><polygon points="81.9,53.4 86.3,53.4 86.3,56.7 81.9,56.7" fill="#2a5cb4"/><polygon points="81.9,56.7 86.3,56.7 86.3,59.4 81.9,59.4" fill="#d8522c"/><polygon points="86.3,26.9 90.8,26.9 90.8,31.3 86.3,31.3" fill="#d8522c"/><polygon points="86.3,31.3 90.8,31.3 90.8,35.8 86.3,35.8" fill="#2a5cb4"/><polygon points="86.3,35.8 90.8,35.8 90.8,39.1 86.3,39.1" fill="#d8522c"/><polygon points="86.3,39.1 90.8,39.1 90.8,43.5 86.3,43.5" fill="#3a62b0"/><polygon points="86.3,43.5 90.8,43.5 90.8,47.3 86.3,47.3" fill="#3a62b0"/><polygon points="86.3,47.3 90.8,47.3 90.8,51.1 86.3,51.1" fill="#2a5cb4"/><polygon points="86.3,51.1 90.8,51.1 90.8,54.4 86.3,54.4" fill="#3a62b0"/><polygon points="86.3,54.4 90.8,54.4 90.8,58.2 86.3,58.2" fill="#2a5cb4"/><polygon points="86.3,58.2 90.8,58.2 90.8,59.4 86.3,59.4" fill="#2a5cb4"/><polygon points="90.8,26.6 93.9,26.6 93.9,31.1 90.8,31.1" fill="#3a62b0"/><polygon points="90.8,31.1 93.9,31.1 93.9,34.4 90.8,34.4" fill="#d8522c"/><polygon points="90.8,34.4 93.9,34.4 93.9,38.8 90.8,38.8" fill="#2a5cb4"/><polygon points="90.8,38.8 93.9,38.8 93.9,42.2 90.8,42.2" fill="#d8522c"/><polygon points="90.8,42.2 93.9,42.2 93.9,46.6 90.8,46.6" fill="#2a5cb4"/><polygon points="90.8,46.6 93.9,46.6 93.9,50.0 90.8,50.0" fill="#3a62b0"/><polygon points="90.8,50.0 93.9,50.0 93.9,53.7 90.8,53.7" fill="#2a5cb4"/><polygon points="90.8,53.7 93.9,53.7 93.9,58.2 90.8,58.2" fill="#2a5cb4"/><polygon points="90.8,58.2 93.9,58.2 93.9,59.4 90.8,59.4" fill="#3a62b0"/><polygon points="93.9,26.4 97.7,26.4 97.7,29.8 93.9,29.8" fill="#3a62b0"/><polygon points="93.9,29.8 97.7,29.8 97.7,33.1 93.9,33.1" fill="#2856a8"/><polygon points="93.9,33.1 97.7,33.1 97.7,36.4 93.9,36.4" fill="#2856a8"/><polygon points="93.9,36.4 97.7,36.4 97.7,40.9 93.9,40.9" fill="#d8522c"/><polygon points="93.9,40.9 97.7,40.9 97.7,44.2 93.9,44.2" fill="#2856a8"/><polygon points="93.9,44.2 97.7,44.2 97.7,47.5 93.9,47.5" fill="#2a5cb4"/><polygon points="93.9,47.5 97.7,47.5 97.7,50.9 93.9,50.9" fill="#3a62b0"/><polygon points="93.9,50.9 97.7,50.9 97.7,54.2 93.9,54.2" fill="#2a5cb4"/><polygon points="93.9,54.2 97.7,54.2 97.7,57.5 93.9,57.5" fill="#2856a8"/><polygon points="93.9,57.5 97.7,57.5 97.7,59.4 93.9,59.4" fill="#2a5cb4"/><polygon points="97.7,26.2 101.4,26.2 101.4,30.7 97.7,30.7" fill="#3a62b0"/><polygon points="97.7,30.7 101.4,30.7 101.4,34.4 97.7,34.4" fill="#2a5cb4"/><polygon points="97.7,34.4 101.4,34.4 101.4,38.2 97.7,38.2" fill="#2a5cb4"/><polygon points="97.7,38.2 101.4,38.2 101.4,42.0 97.7,42.0" fill="#3a62b0"/><polygon points="97.7,42.0 101.4,42.0 101.4,46.4 97.7,46.4" fill="#3a62b0"/><polygon points="97.7,46.4 101.4,46.4 101.4,50.2 97.7,50.2" fill="#2a5cb4"/><polygon points="97.7,50.2 101.4,50.2 101.4,54.0 97.7,54.0" fill="#2856a8"/><polygon points="97.7,54.0 101.4,54.0 101.4,57.3 97.7,57.3" fill="#2a5cb4"/><polygon points="97.7,57.3 101.4,57.3 101.4,59.4 97.7,59.4" fill="#2a5cb4"/><polygon points="9.4,59.4 68.3,59.4 99.4,60.0 99.4,80.6 20.6,78.9 15.0,71.7" fill="#3c454b"/><polygon points="68.3,59.4 99.4,60.0 99.4,78.3 72.8,72.8" fill="#2a3238"/><polygon points="20.0,77.8 99.4,79.4 99.4,81.1 20.8,79.4" fill="#b8503a"/><polygon points="9.4,58.9 68.3,58.3 99.4,59.4 99.4,60.6 68.3,59.7 9.4,60.2" fill="#7a4a44"/></g></svg></div><div class="ti">MS Hamburg.jpg</div><div class="me">JPG <span class="bu">•</span> 4.5 MB</div><div class="dots"><b style="left:0"></b><b style="left:3.4px"></b><b style="left:6.8px"></b></div></div>
<div class="card" style="left:30px;top:359px"><div class="th" style="top:16px;height:94px"><svg width="140" height="94" viewBox="0 0 140 93" preserveAspectRatio="none"><defs><filter id="b6" x="-5%" y="-5%" width="110%" height="110%"><feGaussianBlur stdDeviation=".6"/></filter><filter id="b6b" x="-20%" y="-20%" width="140%" height="140%"><feGaussianBlur stdDeviation="2"/></filter><linearGradient id="h1c" x1="0" y1="0" x2="1" y2="0"><stop offset="0" stop-color="#c8402c"/><stop offset="1" stop-color="#b83424"/></linearGradient></defs>
<rect width="140" height="93" fill="#e6eff3"/>
<g filter="url(#b6b)"><polygon points="0.0,60.9 48.3,60.9 48.3,92.9 0.0,92.9" fill="#f2f4f6"/><polygon points="43.9,63.1 61.7,54.3 61.7,92.9 43.9,92.9" fill="#d8d8d0"/><polygon points="0.0,72.0 6.1,72.0 6.1,92.9 0.0,92.9" fill="#c8c8c0"/></g>
<g filter="url(#b6)">
<polygon points="0.0,45.5 57.2,48.8 55.0,58.7 0.0,56.5" fill="#f0683c"/><polygon points="0.0,48.8 55.0,51.5 55.0,53.2 0.0,50.4" fill="#f8a080"/><polygon points="17.2,41.1 25.0,41.1 25.0,49.9 17.2,49.9" fill="#f0a070"/><polygon points="77.2,0.0 140.0,0.0 140.0,92.9 62.8,92.9 62.8,38.9" fill="url(#h1c)"/><polygon points="79.4,0.0 81.0,0.0 81.0,92.9 79.4,92.9" fill="#a82c20" opacity=".55"/><polygon points="87.2,0.0 88.8,0.0 88.8,92.9 87.2,92.9" fill="#a82c20" opacity=".55"/><polygon points="95.0,0.0 96.6,0.0 96.6,92.9 95.0,92.9" fill="#a82c20" opacity=".55"/><polygon points="105.0,0.0 106.6,0.0 106.6,92.9 105.0,92.9" fill="#a82c20" opacity=".55"/><polygon points="115.0,0.0 116.6,0.0 116.6,92.9 115.0,92.9" fill="#a82c20" opacity=".55"/><polygon points="126.1,0.0 127.7,0.0 127.7,92.9 126.1,92.9" fill="#a82c20" opacity=".55"/><polygon points="135.0,0.0 136.6,0.0 136.6,92.9 135.0,92.9" fill="#a82c20" opacity=".55"/><ellipse cx="120.6" cy="22.3" rx="17.8" ry="21.1" fill="#f2c83a" transform="rotate(-25 120.6 22.3)"/><ellipse cx="131.7" cy="41.1" rx="6.7" ry="7.8" fill="#f0c838"/><ellipse cx="123.9" cy="15.7" rx="10.0" ry="11.1" fill="#f8dc68" opacity=".8"/><ellipse cx="102.8" cy="41.1" rx="12.2" ry="16.7" fill="#1c6a4a" transform="rotate(-30 102.8 41.1)"/><ellipse cx="110.6" cy="52.1" rx="5.6" ry="6.7" fill="#2a7a58"/><ellipse cx="83.9" cy="31.1" rx="8.3" ry="9.4" fill="#f2cc48"/><ellipse cx="89.4" cy="52.1" rx="9.4" ry="13.3" fill="#f0c436" transform="rotate(-30 89.4 52.1)"/><ellipse cx="98.3" cy="60.9" rx="5.0" ry="7.8" fill="#f0c030"/><ellipse cx="87.2" cy="67.5" rx="4.4" ry="6.7" fill="#eec030"/><ellipse cx="66.1" cy="59.8" rx="6.7" ry="7.8" fill="#f2c83c"/><ellipse cx="71.7" cy="47.7" rx="3.3" ry="5.6" fill="#f0d8c8"/><ellipse cx="69.4" cy="74.2" rx="11.1" ry="10.0" fill="#f0c638" transform="rotate(-35 69.4 74.2)"/><ellipse cx="61.7" cy="80.8" rx="5.6" ry="5.6" fill="#eec234"/><path d="M57.2 85.2 Q79.4 74.2 95.0 45.5 T140.0 11.3" fill="none" stroke="#d8582c" stroke-width="1.6"/><path d="M120.6 41.1 L121.7 76.4" stroke="#6a2a20" stroke-width="1"/></g></svg></div><div class="ti">summer-building-construction.jpeg</div><div class="me">JPEG <span class="bu">•</span> 3.5 MB</div><div class="dots"><b style="left:0"></b><b style="left:3.4px"></b><b style="left:6.8px"></b></div></div>
<div class="card" style="left:230px;top:359px"><div class="th" style="top:15px;height:96px"><svg width="140" height="96" viewBox="0 0 140 96"><defs><filter id="b7" x="-5%" y="-5%" width="110%" height="110%"><feGaussianBlur stdDeviation=".5"/></filter><filter id="b7b" x="-20%" y="-20%" width="140%" height="140%"><feGaussianBlur stdDeviation="2.2"/></filter><linearGradient id="s3w" x1="0" y1="1" x2="1" y2="0"><stop offset="0" stop-color="#1c4f86"/><stop offset=".6" stop-color="#2a66a4"/><stop offset="1" stop-color="#4484be"/></linearGradient></defs>
<rect width="140" height="96" fill="url(#s3w)"/>
<g filter="url(#b7b)"><polygon points="0.0,43.7 8.7,41.4 53.1,76.4 104.4,93.9 76.4,96.2 29.7,78.7 0.0,69.4" fill="#dfe9f2" opacity=".8"/><polygon points="0.0,64.7 18.1,71.7 43.7,85.7 29.7,90.4 0.0,78.7" fill="#2f67a0"/><polygon points="111.4,81.1 125.4,60.1 127.7,64.7 113.7,88.1" fill="#c8dcec" opacity=".8"/><polygon points="18.1,1.7 33.2,0.6 29.7,8.7 18.1,11.1" fill="#b8cfe4" opacity=".8"/><polygon points="0.0,0.0 29.7,0.0 18.1,18.1 0.0,29.7" fill="#4a7cae" opacity=".6"/></g>
<g filter="url(#b7)">
<polygon points="7.0,32.1 64.7,64.7 118.4,63.6 114.9,76.4 104.4,89.2 96.2,86.9 53.1,70.6 14.6,47.2" fill="#62aa7c"/><polygon points="64.7,64.7 118.4,63.6 114.9,76.4 104.4,89.2 93.9,75.2" fill="#1d6b42"/><polygon points="14.6,47.8 53.1,71.2 96.2,87.5 104.4,89.8 103.2,92.7 93.9,89.8 50.7,74.1 13.4,49.6" fill="#e86a50"/><polygon points="50.7,74.7 93.9,90.4 103.2,93.3 102.1,94.5 92.7,91.6 49.6,76.4" fill="#f4f4f0"/><polygon points="6.4,29.7 7.0,33.8 64.7,66.5 118.4,64.7 124.2,58.9 116.1,57.7 67.1,63.0" fill="#c82c30"/><polygon points="26.2,11.1 55.4,11.1 56.6,21.6 25.1,21.6" fill="#e4e8ee"/><polygon points="27.4,12.2 54.2,12.2 54.2,14.0 27.4,14.0" fill="#a83840"/><polygon points="34.4,5.2 42.6,5.2 42.6,11.1 34.4,11.1" fill="#d89858"/><polygon points="36.2,2.9 39.1,2.9 39.1,5.8 36.2,5.8" fill="#2a3040"/><polygon points="7.0,18.1 10.5,20.0 10.5,24.7 7.0,22.7" fill="#c8302e"/><polygon points="7.0,22.7 10.5,24.7 10.5,29.4 7.0,27.3" fill="#e0584a"/><polygon points="7.0,27.3 10.5,29.4 10.5,34.1 7.0,31.8" fill="#c8302e"/><polygon points="10.5,20.0 14.1,21.9 14.1,26.7 10.5,24.7" fill="#c8302e"/><polygon points="10.5,24.7 14.1,26.7 14.1,31.6 10.5,29.4" fill="#e0584a"/><polygon points="10.5,29.4 14.1,31.6 14.1,36.4 10.5,34.1" fill="#2456a8"/><polygon points="14.1,21.9 17.6,23.8 17.6,28.8 14.1,26.7" fill="#d03a34"/><polygon points="14.1,26.7 17.6,28.8 17.6,33.7 14.1,31.6" fill="#e0584a"/><polygon points="14.1,31.6 17.6,33.7 17.6,38.6 14.1,36.4" fill="#c8302e"/><polygon points="17.6,23.8 21.2,25.7 21.2,30.8 17.6,28.8" fill="#d03a34"/><polygon points="17.6,28.8 21.2,30.8 21.2,35.9 17.6,33.7" fill="#c8302e"/><polygon points="17.6,33.7 21.2,35.9 21.2,40.9 17.6,38.6" fill="#c8302e"/><polygon points="21.2,25.7 24.7,27.7 24.7,32.8 21.2,30.8" fill="#2a5cb0"/><polygon points="21.2,30.8 24.7,32.8 24.7,38.0 21.2,35.9" fill="#d03a34"/><polygon points="21.2,35.9 24.7,38.0 24.7,43.2 21.2,40.9" fill="#c8302e"/><polygon points="24.7,27.7 28.2,29.6 28.2,34.9 24.7,32.8" fill="#e0584a"/><polygon points="24.7,32.8 28.2,34.9 28.2,40.2 24.7,38.0" fill="#c8302e"/><polygon points="24.7,38.0 28.2,40.2 28.2,45.4 24.7,43.2" fill="#b82a30"/><polygon points="28.2,29.6 31.8,31.5 31.8,36.9 28.2,34.9" fill="#c8302e"/><polygon points="28.2,34.9 31.8,36.9 31.8,42.3 28.2,40.2" fill="#d03a34"/><polygon points="28.2,40.2 31.8,42.3 31.8,47.7 28.2,45.4" fill="#c8302e"/><polygon points="31.8,31.5 35.3,33.4 35.3,38.9 31.8,36.9" fill="#e0584a"/><polygon points="31.8,36.9 35.3,38.9 35.3,44.5 31.8,42.3" fill="#c8302e"/><polygon points="31.8,42.3 35.3,44.5 35.3,50.0 31.8,47.7" fill="#c8302e"/><polygon points="35.3,33.4 38.9,35.3 38.9,41.0 35.3,38.9" fill="#c8302e"/><polygon points="35.3,38.9 38.9,41.0 38.9,46.6 35.3,44.5" fill="#2456a8"/><polygon points="35.3,44.5 38.9,46.6 38.9,52.2 35.3,50.0" fill="#2456a8"/><polygon points="38.9,35.3 42.4,37.2 42.4,43.0 38.9,41.0" fill="#c8302e"/><polygon points="38.9,41.0 42.4,43.0 42.4,48.8 38.9,46.6" fill="#c8302e"/><polygon points="38.9,46.6 42.4,48.8 42.4,54.5 38.9,52.2" fill="#e8e8ea"/><polygon points="42.4,37.2 45.9,39.2 45.9,45.0 42.4,43.0" fill="#c8302e"/><polygon points="42.4,43.0 45.9,45.0 45.9,50.9 42.4,48.8" fill="#2456a8"/><polygon points="42.4,48.8 45.9,50.9 45.9,56.8 42.4,54.5" fill="#e0584a"/><polygon points="45.9,39.2 49.5,41.1 49.5,47.1 45.9,45.0" fill="#2456a8"/><polygon points="45.9,45.0 49.5,47.1 49.5,53.1 45.9,50.9" fill="#2a5cb0"/><polygon points="45.9,50.9 49.5,53.1 49.5,59.0 45.9,56.8" fill="#c8302e"/><polygon points="49.5,41.1 53.0,43.0 53.0,49.1 49.5,47.1" fill="#c8302e"/><polygon points="49.5,47.1 53.0,49.1 53.0,55.2 49.5,53.1" fill="#c8302e"/><polygon points="49.5,53.1 53.0,55.2 53.0,61.3 49.5,59.0" fill="#c8302e"/><polygon points="53.0,43.0 56.6,44.9 56.6,51.1 53.0,49.1" fill="#2a5cb0"/><polygon points="53.0,49.1 56.6,51.1 56.6,57.4 53.0,55.2" fill="#b82a30"/><polygon points="53.0,55.2 56.6,57.4 56.6,63.6 53.0,61.3" fill="#e0584a"/><polygon points="30.9,21.6 36.7,21.3 40.4,26.4 34.4,26.8" fill="#2a5aa8"/><polygon points="36.7,21.3 42.6,21.1 46.4,26.0 40.4,26.4" fill="#c8302e"/><polygon points="42.6,21.1 48.4,20.8 52.4,25.6 46.4,26.0" fill="#2456a8"/><polygon points="48.4,20.8 54.2,20.6 58.4,25.2 52.4,25.6" fill="#e0e4e8"/><polygon points="54.2,20.6 60.1,20.3 64.4,24.7 58.4,25.2" fill="#c8302e"/><polygon points="60.1,20.3 65.9,20.1 70.4,24.3 64.4,24.7" fill="#c03436"/><polygon points="65.9,20.1 71.7,19.8 76.4,23.9 70.4,24.3" fill="#2a5aa8"/><polygon points="37.9,26.2 45.9,26.6 50.1,32.2 41.4,32.1" fill="#2a5aa8"/><polygon points="45.9,26.6 53.9,26.9 58.7,32.4 50.1,32.2" fill="#d04a3c"/><polygon points="53.9,26.9 61.9,27.2 67.4,32.6 58.7,32.4" fill="#2a5aa8"/><polygon points="61.9,27.2 69.9,27.6 76.1,32.7 67.4,32.6" fill="#c8302e"/><polygon points="69.9,27.6 77.9,27.9 84.7,32.9 76.1,32.7" fill="#d04a3c"/><polygon points="77.9,27.9 85.9,28.2 93.4,33.1 84.7,32.9" fill="#2a5aa8"/><polygon points="85.9,28.2 93.9,28.6 102.1,33.2 93.4,33.1" fill="#c03436"/><polygon points="43.7,32.1 52.1,32.4 57.2,39.3 49.6,39.1" fill="#c03436"/><polygon points="52.1,32.4 60.4,32.7 64.9,39.6 57.2,39.3" fill="#e0e4e8"/><polygon points="60.4,32.7 68.7,33.1 72.6,39.8 64.9,39.6" fill="#e0e4e8"/><polygon points="68.7,33.1 77.1,33.4 80.2,40.1 72.6,39.8" fill="#c03436"/><polygon points="77.1,33.4 85.4,33.7 87.9,40.3 80.2,40.1" fill="#c03436"/><polygon points="85.4,33.7 93.7,34.1 95.6,40.6 87.9,40.3" fill="#d04a3c"/><polygon points="93.7,34.1 102.1,34.4 103.2,40.8 95.6,40.6" fill="#d04a3c"/><polygon points="51.9,39.7 60.4,39.9 64.6,44.9 56.6,44.9" fill="#d04a3c"/><polygon points="60.4,39.9 68.9,40.2 72.6,44.9 64.6,44.9" fill="#2a5aa8"/><polygon points="68.9,40.2 77.4,40.4 80.6,44.9 72.6,44.9" fill="#e0e4e8"/><polygon points="77.4,40.4 85.9,40.7 88.6,44.9 80.6,44.9" fill="#c8302e"/><polygon points="85.9,40.7 94.4,40.9 96.6,44.9 88.6,44.9" fill="#2456a8"/><polygon points="94.4,40.9 102.9,41.2 104.6,44.9 96.6,44.9" fill="#2a5aa8"/><polygon points="102.9,41.2 111.4,41.4 112.6,44.9 104.6,44.9" fill="#c8302e"/><polygon points="56.6,44.9 61.2,44.9 61.2,49.6 56.6,49.6" fill="#b82a30"/><polygon points="56.6,49.6 61.2,49.6 61.2,54.2 56.6,54.2" fill="#c8302e"/><polygon points="56.6,54.2 61.2,54.2 61.2,58.9 56.6,58.9" fill="#2456a8"/><polygon points="56.6,58.9 61.2,58.9 61.2,63.6 56.6,63.6" fill="#e8e8ea"/><polygon points="61.2,44.9 65.9,44.9 65.9,49.6 61.2,49.6" fill="#c8302e"/><polygon points="61.2,49.6 65.9,49.6 65.9,54.2 61.2,54.2" fill="#c8302e"/><polygon points="61.2,54.2 65.9,54.2 65.9,58.9 61.2,58.9" fill="#c8302e"/><polygon points="61.2,58.9 65.9,58.9 65.9,63.6 61.2,63.6" fill="#2a5cb0"/><polygon points="65.9,44.9 70.6,44.9 70.6,49.6 65.9,49.6" fill="#c8302e"/><polygon points="65.9,49.6 70.6,49.6 70.6,54.2 65.9,54.2" fill="#c8302e"/><polygon points="65.9,54.2 70.6,54.2 70.6,58.9 65.9,58.9" fill="#c8302e"/><polygon points="65.9,58.9 70.6,58.9 70.6,63.6 65.9,63.6" fill="#2456a8"/><polygon points="70.6,44.9 75.2,44.9 75.2,49.6 70.6,49.6" fill="#c02c30"/><polygon points="70.6,49.6 75.2,49.6 75.2,54.2 70.6,54.2" fill="#2456a8"/><polygon points="70.6,54.2 75.2,54.2 75.2,58.9 70.6,58.9" fill="#c8302e"/><polygon points="70.6,58.9 75.2,58.9 75.2,63.6 70.6,63.6" fill="#2a5cb0"/><polygon points="75.2,44.9 79.9,44.9 79.9,49.6 75.2,49.6" fill="#d23a34"/><polygon points="75.2,49.6 79.9,49.6 79.9,54.2 75.2,54.2" fill="#c8302e"/><polygon points="75.2,54.2 79.9,54.2 79.9,58.9 75.2,58.9" fill="#2456a8"/><polygon points="75.2,58.9 79.9,58.9 79.9,63.6 75.2,63.6" fill="#d23a34"/><polygon points="79.9,44.9 84.6,44.9 84.6,49.6 79.9,49.6" fill="#c8302e"/><polygon points="79.9,49.6 84.6,49.6 84.6,54.2 79.9,54.2" fill="#2a5cb0"/><polygon points="79.9,54.2 84.6,54.2 84.6,58.9 79.9,58.9" fill="#c02c30"/><polygon points="79.9,58.9 84.6,58.9 84.6,63.6 79.9,63.6" fill="#c8302e"/><polygon points="84.6,44.9 89.2,44.9 89.2,49.6 84.6,49.6" fill="#2456a8"/><polygon points="84.6,49.6 89.2,49.6 89.2,54.2 84.6,54.2" fill="#2a5cb0"/><polygon points="84.6,54.2 89.2,54.2 89.2,58.9 84.6,58.9" fill="#2456a8"/><polygon points="84.6,58.9 89.2,58.9 89.2,63.6 84.6,63.6" fill="#c8302e"/><polygon points="89.2,44.9 93.9,44.9 93.9,49.6 89.2,49.6" fill="#2456a8"/><polygon points="89.2,49.6 93.9,49.6 93.9,54.2 89.2,54.2" fill="#2456a8"/><polygon points="89.2,54.2 93.9,54.2 93.9,58.9 89.2,58.9" fill="#c8302e"/><polygon points="89.2,58.9 93.9,58.9 93.9,63.6 89.2,63.6" fill="#c8302e"/><polygon points="93.9,44.9 98.6,44.9 98.6,49.6 93.9,49.6" fill="#b82a30"/><polygon points="93.9,49.6 98.6,49.6 98.6,54.2 93.9,54.2" fill="#c02c30"/><polygon points="93.9,54.2 98.6,54.2 98.6,58.9 93.9,58.9" fill="#c02c30"/><polygon points="93.9,58.9 98.6,58.9 98.6,63.6 93.9,63.6" fill="#d23a34"/><polygon points="98.6,44.9 103.2,44.9 103.2,49.6 98.6,49.6" fill="#b82a30"/><polygon points="98.6,49.6 103.2,49.6 103.2,54.2 98.6,54.2" fill="#c8302e"/><polygon points="98.6,54.2 103.2,54.2 103.2,58.9 98.6,58.9" fill="#c8302e"/><polygon points="98.6,58.9 103.2,58.9 103.2,63.6 98.6,63.6" fill="#c8302e"/><polygon points="103.2,44.9 107.9,44.9 107.9,49.6 103.2,49.6" fill="#2456a8"/><polygon points="103.2,49.6 107.9,49.6 107.9,54.2 103.2,54.2" fill="#c02c30"/><polygon points="103.2,54.2 107.9,54.2 107.9,58.9 103.2,58.9" fill="#d23a34"/><polygon points="103.2,58.9 107.9,58.9 107.9,63.6 103.2,63.6" fill="#2a5cb0"/><polygon points="107.9,44.9 112.6,44.9 112.6,49.6 107.9,49.6" fill="#d23a34"/><polygon points="107.9,49.6 112.6,49.6 112.6,54.2 107.9,54.2" fill="#c8302e"/><polygon points="107.9,54.2 112.6,54.2 112.6,58.9 107.9,58.9" fill="#c8302e"/><polygon points="107.9,58.9 112.6,58.9 112.6,63.6 107.9,63.6" fill="#c8302e"/><polygon points="104.4,35.0 113.1,35.6 113.1,41.4 104.4,41.2" fill="#d8383a"/><polygon points="99.1,46.1 102.1,46.1 102.1,63.6 99.1,63.6" fill="#f0f0ee"/></g></svg></div><div class="ti">New Orleans.jpg</div><div class="me">JPG <span class="bu">•</span> 13 MB</div><div class="dots"><b style="left:0"></b><b style="left:3.4px"></b><b style="left:6.8px"></b></div></div>
<div class="card" style="left:430px;top:359px"><svg class="abs" style="left:-0.8px;top:-0.6px" width="168" height="122" viewBox="0 0 168 122"><path d="M50.5 31.5 H81.7 L85.3 37.6 H120.3 L123.2 42.4 H45.8 Z" fill="#4e4e4e"/><path d="M39.7 48.6 H129.8 L124.4 104.4 H45.4 Z" fill="#4e4e4e"/></svg><div class="ti">Brand Guidelines elements</div><div class="me" style="letter-spacing:0">21 files</div><div class="dots"><b style="left:0"></b><b style="left:3.4px"></b><b style="left:6.8px"></b></div></div>
<div class="card" style="left:630px;top:359px"><div class="th" style="top:17px;height:93px"><svg width="140" height="93" viewBox="0 0 140 93"><defs><filter id="b8" x="-5%" y="-5%" width="110%" height="110%"><feGaussianBlur stdDeviation=".55"/></filter><linearGradient id="w2p" x1="0" y1="0" x2="0" y2="1"><stop offset="0" stop-color="#f6f7f8"/><stop offset=".6" stop-color="#e4e8ee"/><stop offset="1" stop-color="#c4ccd8"/></linearGradient><linearGradient id="w2y" x1="0" y1="0" x2="1" y2="0"><stop offset="0" stop-color="#e0b024"/><stop offset=".5" stop-color="#f6d040"/><stop offset="1" stop-color="#e4b428"/></linearGradient></defs>
<rect width="140" height="93" fill="#e2ecf3"/>
<polygon points="0.0,48.8 139.4,48.8 139.4,92.5 0.0,92.5" fill="#5aa2dc"/><polygon points="0.0,48.8 139.4,48.8 139.4,53.4 0.0,53.4" fill="#8cc0e8"/><g filter="url(#b8)">
<polygon points="118.4,51.1 120.0,51.1 120.0,92.5 118.4,92.5" fill="#f0c22e"/><polygon points="123.1,51.1 124.7,51.1 124.7,92.5 123.1,92.5" fill="#f0c22e"/><polygon points="117.2,51.1 139.4,51.1 139.4,53.4 117.2,53.4" fill="#f0c22e"/><polygon points="117.2,68.6 139.4,68.6 139.4,70.7 117.2,70.7" fill="#f0c22e"/><polygon points="117.2,88.4 139.4,88.4 139.4,92.5 117.2,92.5" fill="#f0c22e"/><polygon points="109.1,0.0 127.7,0.0 139.4,18.4 139.4,35.9" fill="#f0c22e"/><polygon points="2.9,0.0 12.2,0.0 19.2,21.9 9.9,23.1" fill="#f0c22e"/><polygon points="0.0,21.9 29.7,21.9 33.2,31.3 34.4,46.4 0.0,46.4" fill="#f0c22e"/><polygon points="0.0,35.9 21.6,35.9 21.6,39.4 0.0,39.4" fill="#d8a820"/><polygon points="0.0,20.8 2.9,20.8 2.9,33.6 0.0,33.6" fill="#3a3a38"/><polygon points="0.0,4.4 2.9,4.4 2.9,13.8 0.0,13.8" fill="#44506a"/><polygon points="25.7,5.6 32.1,0.7 36.7,6.8 35.6,23.3 26.2,19.6" fill="#c83432"/><polygon points="13.4,47.6 37.9,47.6 37.9,51.3 13.4,51.3" fill="#1e2226"/><polygon points="0.0,56.3 18.1,56.3 18.1,68.6 0.0,68.6" fill="#e8d89a"/><polygon points="23.9,53.4 29.7,53.4 28.6,62.8 25.3,65.1" fill="#d8a820"/><path d="M0.0 69.8 L18.1 54.6 Q60.1 51.1 67.1 74.4 L64.7 92.5 L0.0 92.5 Z" fill="url(#w2p)"/><path d="M51.9 54.0 Q74.1 68.6 61.8 92.5" fill="none" stroke="#2a3038" stroke-width="1.2"/><rect x="43.2" y="0.0" width="12.2" height="51.3" fill="url(#w2y)"/><polygon points="43.7,26.6 70.6,26.6 71.7,44.1 64.7,53.4 43.7,53.4" fill="#f0c22e"/><polygon points="44.9,37.1 63.6,37.1 63.6,45.3 44.9,45.3" fill="#d8a820"/><path d="M55.4 53.4 Q78.7 65.1 64.7 92.5 L81.1 92.5 Q88.1 67.4 74.1 52.3 Z" fill="#f0c22e"/><polygon points="81.1,58.1 97.4,61.6 97.4,81.4 83.4,79.1" fill="#f0e4b0"/><polygon points="81.1,79.1 91.6,79.1 91.6,92.5 76.4,92.5" fill="#f0c22e"/><ellipse cx="79.7" cy="27.2" rx="6.8" ry="19.2" fill="none" stroke="#e8bc28" stroke-width="1.5"/><path d="M75.2 31.3 L84.6 33.6" stroke="#e0b428" stroke-width="1.2"/><polygon points="88.1,21.9 91.6,20.2 99.7,31.3 106.7,34.8 99.7,39.4 93.9,35.9" fill="#ea5220"/><polygon points="98.6,33.6 111.4,33.0 116.6,45.3 116.1,62.8 116.6,92.5 91.6,92.5 97.4,74.4 98.6,58.1" fill="#ea5220"/><polygon points="78.7,45.8 95.1,47.6 99.7,47.6 99.7,56.3 92.7,56.3 79.3,49.9" fill="#ea5220"/><polygon points="93.3,31.3 96.2,33.0 95.3,37.1 92.5,35.3" fill="#d8d8d4"/><polygon points="93.9,47.6 97.4,47.6 97.4,56.3 93.9,56.3" fill="#dcdcd8"/><polygon points="111.4,37.1 114.9,38.8 115.5,45.3 112.6,44.1" fill="#d4d4d0"/><ellipse cx="106.1" cy="27.8" rx="6.4" ry="5.2" fill="#2a2420"/><polygon points="99.7,26.6 104.4,26.6 104.4,31.3 100.3,31.3" fill="#c89878"/><path d="M98.0 24.8 Q105.6 6.8 114.3 23.3 L106.7 23.3 Z" fill="#f4f4f2"/><ellipse cx="85.2" cy="19.4" rx="3.3" ry="2.9" fill="#2a3448"/><ellipse cx="77.0" cy="44.9" rx="3.0" ry="3.3" fill="#34405a"/><polygon points="106.7,67.4 111.4,62.8 114.9,67.4 112.6,74.4" fill="#d44818"/></g></svg></div><div class="ti">Worker Oil field XA1201.jpg</div><div class="me">JPG <span class="bu">•</span> 12 MB</div><div class="dots"><b style="left:0"></b><b style="left:3.4px"></b><b style="left:6.8px"></b></div></div>
<div class="card" style="left:830px;top:359px"><div class="th" style="top:17px;height:93px"><svg width="140" height="93" viewBox="0 0 140 93"><defs><filter id="b9" x="-5%" y="-5%" width="110%" height="110%"><feGaussianBlur stdDeviation=".55"/></filter><linearGradient id="m1s" x1="0" y1="0" x2=".3" y2="1"><stop offset="0" stop-color="#a9c0d8"/><stop offset=".55" stop-color="#cfdbe6"/><stop offset=".85" stop-color="#efe6dc"/><stop offset="1" stop-color="#f4e2c8"/></linearGradient></defs>
<rect width="140" height="93" fill="url(#m1s)"/>
<g filter="url(#b9)">
<polygon points="0.0,31.3 53.1,12.6 55.4,19.6 0.0,40.6" fill="#30353c"/><path d="M50.7 10.3 L55.4 0.0 Q74.1 6.8 75.2 37.1 L72.9 37.1 Q60.1 23.1 53.1 13.8 Z" fill="#16201e"/><polygon points="57.7,13.8 64.7,10.3 71.7,31.3 67.1,31.3" fill="#1f4a44" opacity=".7"/><polygon points="75.2,37.1 76.4,37.1 77.8,48.8 75.9,48.8" fill="#1c2024"/><polygon points="76.4,48.8 77.1,48.8 79.0,69.8 78.3,69.8" fill="#3a4048" opacity=".7"/><polygon points="19.8,34.8 26.2,33.6 12.2,67.4 4.1,81.4 0.0,81.4 0.0,74.4" fill="#2e3238"/><polygon points="22.7,34.8 28.0,34.2 30.9,55.8 25.7,55.8" fill="#34383e"/><polygon points="0.0,76.8 14.6,76.8 14.6,92.5 0.0,92.5" fill="#181a1e"/><polygon points="0.0,61.6 1.7,60.4 4.1,76.8 1.7,77.9" fill="#202428"/><polygon points="68.2,79.1 99.7,67.4 105.0,65.7 105.6,68.6 69.4,82.6" fill="#3c3e40"/><polygon points="86.9,63.9 89.2,63.9 97.4,83.8 95.1,83.8" fill="#2e3032"/><polygon points="75.2,83.8 101.5,83.8 101.5,92.5 75.2,92.5" fill="#2a2c2c" opacity=".85"/><path d="M99.1 62.2 Q106.7 65.1 107.3 75.6" fill="none" stroke="#7a7e84" stroke-width="1"/><polygon points="69.4,90.8 139.4,89.8 139.4,92.5 69.4,92.5" fill="#6a6458"/><polygon points="9.9,67.4 23.9,58.1 33.2,47.6 60.1,47.6 69.4,55.8 71.2,76.8 68.2,92.5 16.9,92.5 7.6,81.4" fill="#2a2a3c"/><polygon points="23.9,67.4 29.7,47.6 34.4,44.1 39.1,47.6 33.2,67.4 25.1,69.8" fill="#ee5a28"/><polygon points="39.1,73.3 53.1,53.4 55.4,45.3 61.2,46.4 63.6,52.3 49.6,74.4 41.4,76.8" fill="#ee5a28"/><polygon points="16.9,86.1 25.1,84.9 25.1,92.5 16.9,92.5" fill="#e8501e"/><polygon points="60.1,86.1 68.2,84.9 68.2,92.5 57.7,92.5" fill="#e8501e"/><polygon points="39.1,51.1 53.1,47.6 49.6,55.8 42.6,62.8 37.9,58.1" fill="#f0f2f6"/><polygon points="37.9,53.4 46.1,52.3 41.4,62.8 35.6,67.4" fill="#232a44"/><polygon points="33.2,73.3 40.2,70.9 41.4,77.9 34.4,79.1" fill="#e8e4ea"/><polygon points="6.4,67.4 23.9,63.9 33.2,72.1 34.4,81.4 18.1,86.1 7.6,81.4" fill="#1e1e2a"/><ellipse cx="46.1" cy="40.6" rx="9.9" ry="9.3" fill="#e2b49a"/><ellipse cx="42.6" cy="42.9" rx="5.8" ry="4.7" fill="#d8a488"/><path d="M35.0 31.3 Q36.7 17.3 47.2 17.8 Q56.6 19.6 57.7 33.0 L56.6 34.2 Q46.1 32.4 35.0 33.0 Z" fill="#f07a2c"/></g></svg></div><div class="ti">Manager Oil field YT2041.jpg</div><div class="me">JPG <span class="bu">•</span> 3.9 MB</div><div class="lab" style="left:133px;background:#e8392b"></div><div class="dots"><b style="left:0"></b><b style="left:3.4px"></b><b style="left:6.8px"></b></div></div>
<div class="card" style="left:1030px;top:359px"><svg class="abs" style="left:-0.8px;top:-0.6px" width="168" height="122" viewBox="0 0 168 122"><path d="M50.5 31.5 H81.7 L85.3 37.6 H120.3 L123.2 42.4 H45.8 Z" fill="#4e4e4e"/><path d="M39.7 48.6 H129.8 L124.4 104.4 H45.4 Z" fill="#4e4e4e"/></svg><div class="ti">03. Harbors</div><div class="me" style="letter-spacing:0">25 files</div><div class="dots"><b style="left:0"></b><b style="left:3.4px"></b><b style="left:6.8px"></b></div></div>
<div class="card" style="left:30px;top:552px"><svg class="abs" style="left:-0.8px;top:-0.6px" width="168" height="122" viewBox="0 0 168 122"><path d="M50.5 31.5 H81.7 L85.3 37.6 H120.3 L123.2 42.4 H45.8 Z" fill="#4e4e4e"/><path d="M39.7 48.6 H129.8 L124.4 104.4 H45.4 Z" fill="#4e4e4e"/></svg><div class="ti">01. Oil rigs</div><div class="me" style="letter-spacing:0">12 files</div><div class="dots"><b style="left:0"></b><b style="left:3.4px"></b><b style="left:6.8px"></b></div></div>
<div class="card" style="left:230px;top:552px"><div class="th" style="top:17px;height:93px"><svg width="140" height="93" viewBox="0 0 140 93"><defs><filter id="ba" x="-5%" y="-5%" width="110%" height="110%"><feGaussianBlur stdDeviation=".5" edgeMode="duplicate"/></filter><filter id="bac" x="-20%" y="-20%" width="140%" height="140%"><feGaussianBlur stdDeviation="1"/></filter><filter id="bab" x="-20%" y="-20%" width="140%" height="140%"><feGaussianBlur stdDeviation="2"/></filter><linearGradient id="hqs" x1="0" y1="0" x2="0" y2="1"><stop offset="0" stop-color="#1f6ccc"/><stop offset=".6" stop-color="#4a92de"/><stop offset="1" stop-color="#8abcec"/></linearGradient><linearGradient id="hqg" x1="0" y1="0" x2="1" y2="0"><stop offset="0" stop-color="#15294a"/><stop offset="1" stop-color="#2558a8"/></linearGradient></defs>
<rect width="140" height="93" fill="url(#hqs)"/>
<g filter="url(#bab)"><ellipse cx="12.2" cy="44.1" rx="15.2" ry="15.2" fill="#ffffff"/><ellipse cx="23.9" cy="12.6" rx="15.2" ry="9.3" fill="#f4f8fc" transform="rotate(35 23.9 12.6)"/><ellipse cx="33.2" cy="26.6" rx="7.0" ry="5.8" fill="#e8f0fa"/><ellipse cx="69.4" cy="4.4" rx="8.2" ry="3.5" fill="#e0ecf8"/></g>
<g filter="url(#ba)">
<polygon points="0.0,61.6 18.1,51.1 18.1,80.3 0.0,81.4" fill="#eef0f2"/><polygon points="0.0,72.1 16.9,67.4 16.9,70.9 0.0,74.4" fill="#30363c"/><polygon points="18.1,47.6 25.1,41.8 25.1,79.7 18.1,79.7" fill="#1e2c3c"/><polygon points="24.8,40.6 33.8,40.6 33.8,79.7 24.8,79.7" fill="#f6f7f8"/><polygon points="32.1,40.0 68.8,12.6 68.8,56.9 33.8,65.1 33.8,40.6" fill="url(#hqg)"/><polygon points="36.7,48.8 47.2,30.1 56.6,39.4 55.4,48.8 36.7,56.9" fill="#18242c" opacity=".85"/><polygon points="33.8,58.1 68.8,48.8 68.8,56.9 33.8,65.1" fill="#14202c"/><polygon points="33.8,56.7 68.8,45.8 68.8,47.6 33.8,58.4" fill="#dfe6ee"/><polygon points="68.8,12.6 139.4,51.1 139.4,63.9 68.8,56.9" fill="#1f50a0"/><polygon points="83.4,27.8 99.7,31.3 123.1,44.1 123.1,62.8 85.7,58.1" fill="#d4e0ee" opacity=".75"/><polygon points="71.7,32.4 78.7,26.6 85.7,37.1 86.9,48.8 71.7,46.4" fill="#14222c" opacity=".9"/><polygon points="68.8,47.6 139.4,58.1 139.4,64.2 68.8,56.9" fill="#101a24"/><polygon points="68.8,45.8 139.4,56.9 139.4,58.3 68.8,47.4" fill="#e2e8f0"/><polygon points="107.9,51.1 139.4,50.5 139.4,63.9 107.9,62.8" fill="#0e141c" opacity=".8"/><polygon points="33.8,65.1 68.8,56.9 139.4,64.2 139.4,73.3 68.8,73.3 33.8,73.3" fill="#f8f9fa"/><polygon points="44.9,65.7 61.2,63.3 61.2,66.3 44.9,68.6" fill="#5a78b8" opacity=".6"/><polygon points="24.8,73.3 139.4,73.3 139.4,82.6 24.8,82.6" fill="#f4f5f6"/><polygon points="43.7,73.3 63.6,71.5 63.6,82.6 43.7,81.4" fill="#10161c"/><polygon points="75.8,71.5 110.2,73.3 110.2,82.6 75.8,82.6" fill="#141a20"/><polygon points="119.0,72.7 139.4,72.7 139.4,82.6 119.0,82.6" fill="#12181e"/><polygon points="79.9,54.6 81.3,54.6 81.3,92.5 79.9,92.5" fill="#c8ccd0"/><polygon points="0.0,81.4 139.4,82.6 139.4,92.5 0.0,92.5" fill="#c4c8c8"/><polygon points="0.0,83.8 33.2,86.1 64.7,92.5 0.0,92.5" fill="#8e9498"/></g><g filter="url(#bac)"><ellipse cx="36.7" cy="76.2" rx="7.0" ry="3.5" fill="#5e8a3a"/><ellipse cx="36.7" cy="82.6" rx="8.2" ry="3.5" fill="#6e9a44"/><ellipse cx="53.1" cy="84.3" rx="8.2" ry="3.5" fill="#7aa44c"/><ellipse cx="67.1" cy="88.4" rx="9.3" ry="2.6" fill="#84b050"/><ellipse cx="75.2" cy="83.2" rx="5.2" ry="3.5" fill="#4e7c34"/><ellipse cx="91.6" cy="81.4" rx="7.0" ry="3.3" fill="#b08a8c"/><ellipse cx="95.1" cy="86.1" rx="10.5" ry="2.9" fill="#7aa44c"/><ellipse cx="106.7" cy="89.6" rx="21.0" ry="2.1" fill="#9ab060"/><ellipse cx="5.2" cy="77.3" rx="4.7" ry="2.9" fill="#5e8a3a"/><ellipse cx="114.9" cy="82.0" rx="4.1" ry="2.1" fill="#4e7c34"/></g></svg></div><div class="ti">Headquarter</div><div class="me"><span class="bu">•</span> 997 KB</div><div class="dots"><b style="left:0"></b><b style="left:3.4px"></b><b style="left:6.8px"></b></div></div>
<div class="card" style="left:430px;top:552px"><svg class="abs" style="left:0;top:0" width="168" height="122" viewBox="0 0 168 122"><defs><linearGradient id="ig1" x1="0" y1="0" x2="0" y2="1"><stop offset="0" stop-color="#f3b3d3"/><stop offset="1" stop-color="#e98fc0"/></linearGradient><linearGradient id="ig2" x1="0" y1="0" x2="0" y2="1"><stop offset="0" stop-color="#c63f85"/><stop offset="1" stop-color="#a02866"/></linearGradient></defs><rect x="48.7" y="16" width="70.3" height="93" fill="url(#ig1)" stroke="#e59ac4" stroke-width=".8"/><rect x="65" y="60.3" width="8" height="35.4" fill="#bf3c84"/><text x="78.2" y="95.7" font-family="Liberation Sans, sans-serif" font-weight="bold" font-size="41" fill="#bf3c84" stroke="#bf3c84" stroke-width=".8" textLength="28" lengthAdjust="spacingAndGlyphs">D</text><rect x="36" y="21" width="66" height="23" fill="url(#ig2)"/><text x="45.7" y="40" font-family="Liberation Sans, sans-serif" font-weight="bold" font-size="20.5" fill="#fff" textLength="48.6" lengthAdjust="spacingAndGlyphs">INDD</text></svg><div class="ti">InDesign document.indd</div><div class="me">INDD <span class="bu">•</span> 1 MB</div><div class="lab" style="left:133px;background:#e8392b"></div><div class="dots"><b style="left:0"></b><b style="left:3.4px"></b><b style="left:6.8px"></b></div></div>
<div class="card" style="left:630px;top:552px"><svg class="abs" style="left:-0.8px;top:-0.6px" width="168" height="122" viewBox="0 0 168 122"><path d="M50.5 31.5 H81.7 L85.3 37.6 H120.3 L123.2 42.4 H45.8 Z" fill="#4e4e4e"/><path d="M39.7 48.6 H129.8 L124.4 104.4 H45.4 Z" fill="#4e4e4e"/></svg><div class="ti">06. Videos</div><div class="me" style="letter-spacing:0">6 files</div><div class="dots"><b style="left:0"></b><b style="left:3.4px"></b><b style="left:6.8px"></b></div></div>
<div class="card" style="left:830px;top:552px"><svg class="abs" style="left:0;top:0" width="168" height="122" viewBox="0 0 168 122"><defs><linearGradient id="xg1" x1="0" y1="0" x2="1" y2="1"><stop offset="0" stop-color="#ffffff"/><stop offset="1" stop-color="#e9e9e9"/></linearGradient></defs><rect x="49.2" y="17" width="70.3" height="93" fill="#000" opacity=".12"/><rect x="48.7" y="16" width="70.3" height="93" fill="url(#xg1)" stroke="#c4c4c4" stroke-width=".8"/><rect x="58.3" y="46.7" width="50.4" height="56.6" fill="#fff" stroke="#9a9a9a" stroke-width=".7"/><rect x="58.3" y="46.7" width="50.4" height="7" fill="#dcdcdc"/><rect x="58.3" y="46.7" width="12.7" height="56.6" fill="#dcdcdc"/><path d="M71.0 46.7 V103.3" stroke="#8e8e8e" stroke-width=".7"/><path d="M83.7 46.7 V103.3" stroke="#8e8e8e" stroke-width=".7"/><path d="M96.3 46.7 V103.3" stroke="#8e8e8e" stroke-width=".7"/><path d="M58.3 53.8 H108.7" stroke="#a0a0a0" stroke-width=".7"/><path d="M58.3 60.8 H108.7" stroke="#a0a0a0" stroke-width=".7"/><path d="M58.3 67.9 H108.7" stroke="#a0a0a0" stroke-width=".7"/><path d="M58.3 75.0 H108.7" stroke="#a0a0a0" stroke-width=".7"/><path d="M58.3 82.1 H108.7" stroke="#a0a0a0" stroke-width=".7"/><path d="M58.3 89.1 H108.7" stroke="#a0a0a0" stroke-width=".7"/><path d="M58.3 96.2 H108.7" stroke="#a0a0a0" stroke-width=".7"/><rect x="71" y="53.7" width="12.7" height="7.1" fill="#fff" stroke="#555" stroke-width="1"/><text x="63.4" y="59.4" font-family="Liberation Sans, sans-serif" font-size="4" fill="#777">1</text><text x="63.4" y="66.4" font-family="Liberation Sans, sans-serif" font-size="4" fill="#777">2</text><text x="63.4" y="73.5" font-family="Liberation Sans, sans-serif" font-size="4" fill="#777">3</text><text x="63.4" y="80.6" font-family="Liberation Sans, sans-serif" font-size="4" fill="#777">4</text><text x="63.4" y="87.7" font-family="Liberation Sans, sans-serif" font-size="4" fill="#777">5</text><text x="63.4" y="94.7" font-family="Liberation Sans, sans-serif" font-size="4" fill="#777">6</text><text x="63.4" y="101.8" font-family="Liberation Sans, sans-serif" font-size="4" fill="#777">7</text><text x="76.0" y="52" font-family="Liberation Sans, sans-serif" font-size="4" fill="#777">A</text><text x="88.7" y="52" font-family="Liberation Sans, sans-serif" font-size="4" fill="#777">B</text><text x="101.4" y="52" font-family="Liberation Sans, sans-serif" font-size="4" fill="#777">C</text><rect x="36" y="21" width="66" height="23" fill="#21b438"/><text x="46.3" y="40" font-family="Liberation Sans, sans-serif" font-weight="bold" font-size="20.5" fill="#fff" textLength="48.0" lengthAdjust="spacingAndGlyphs">XLSX</text></svg><div class="ti">Excel Workbook.xlsx</div><div class="me">XLSX <span class="bu">•</span> 25 KB</div><div class="lab" style="left:133px;background:#f7d83a"></div><div class="dots"><b style="left:0"></b><b style="left:3.4px"></b><b style="left:6.8px"></b></div></div>
<div class="card" style="left:1030px;top:552px"><svg class="abs" style="left:0;top:0" width="168" height="122" viewBox="0 0 168 122"><defs><linearGradient id="pg1" x1="0" y1="0" x2="1" y2="1"><stop offset="0" stop-color="#ffffff"/><stop offset="1" stop-color="#e9e9e9"/></linearGradient><linearGradient id="pg2" x1="0" y1="0" x2="0" y2="1"><stop offset="0" stop-color="#ffffff"/><stop offset=".25" stop-color="#a9d8f4"/><stop offset="1" stop-color="#e9f5fc"/></linearGradient></defs><rect x="49.2" y="17" width="70.3" height="93" fill="#000" opacity=".12"/><rect x="48.7" y="16" width="70.3" height="93" fill="url(#pg1)" stroke="#c4c4c4" stroke-width=".8"/><rect x="57.7" y="52.3" width="38" height="35.4" rx="1" fill="#f2f2f2" stroke="#d0d0d0" stroke-width=".7"/><rect x="60.4" y="59.7" width="32.4" height="20" fill="url(#pg2)" stroke="#3f6fb0" stroke-width="1"/><circle cx="64.7" cy="55.8" r=".7" fill="#bbb"/><circle cx="64.7" cy="83.8" r=".7" fill="#bbb"/><circle cx="88.7" cy="55.8" r=".7" fill="#bbb"/><circle cx="88.7" cy="83.8" r=".7" fill="#bbb"/><rect x="71.7" y="65.0" width="38" height="35.4" rx="1" fill="#f2f2f2" stroke="#d0d0d0" stroke-width=".7"/><rect x="74.4" y="72.4" width="32.4" height="20" fill="url(#pg2)" stroke="#3f6fb0" stroke-width="1"/><circle cx="78.7" cy="68.5" r=".7" fill="#bbb"/><circle cx="78.7" cy="96.5" r=".7" fill="#bbb"/><circle cx="102.7" cy="68.5" r=".7" fill="#bbb"/><circle cx="102.7" cy="96.5" r=".7" fill="#bbb"/><rect x="36" y="21" width="66" height="23" fill="#f58a1f"/><text x="47.0" y="40" font-family="Liberation Sans, sans-serif" font-weight="bold" font-size="20.5" fill="#fff" textLength="47.3" lengthAdjust="spacingAndGlyphs">PPTX</text></svg><div class="ti">Power Point Presentation.pptx</div><div class="me">PPTX <span class="bu">•</span> 39 KB</div><div class="dots"><b style="left:0"></b><b style="left:3.4px"></b><b style="left:6.8px"></b></div></div>
<div class="card" style="left:30px;top:745px"><svg class="abs" style="left:0;top:0" width="168" height="122" viewBox="0 0 168 122"><defs><linearGradient id="dg1" x1="0" y1="0" x2="1" y2="1"><stop offset="0" stop-color="#ffffff"/><stop offset="1" stop-color="#e9e9e9"/></linearGradient><linearGradient id="dg2" x1="0" y1="0" x2="0" y2="1"><stop offset="0" stop-color="#ea8620"/><stop offset="1" stop-color="#b5570a"/></linearGradient><linearGradient id="dg3" x1="0" y1="0" x2="1" y2="1"><stop offset="0" stop-color="#d8d8d8"/><stop offset=".5" stop-color="#ffffff"/><stop offset="1" stop-color="#d4d4d4"/></linearGradient></defs><rect x="49.2" y="17" width="70.3" height="93" fill="#000" opacity=".12"/><rect x="48.7" y="16" width="70.3" height="93" fill="url(#dg1)" stroke="#c4c4c4" stroke-width=".8"/><path d="M62.7 58 L88 54 L106.2 60 L106.2 90.5 L78 96.5 L62.7 88 Z" fill="url(#dg3)" stroke="#9a9a9a" stroke-width=".7" stroke-linejoin="round"/><path d="M62.7 58 L78 64.5 L106.2 60 M78 64.5 V96.5" fill="none" stroke="#9a9a9a" stroke-width=".7"/><path d="M88 54 V84 L62.7 88 M88 84 L106.2 90.5" fill="none" stroke="#c4c4c4" stroke-width=".5"/><rect x="36" y="21" width="66" height="23" fill="url(#dg2)"/><text x="48.7" y="40" font-family="Liberation Sans, sans-serif" font-weight="bold" font-size="20.5" fill="#fff" textLength="40.0" lengthAdjust="spacingAndGlyphs">DWG</text></svg><div class="ti">Wireframe workfile.dwg</div><div class="me">DWG <span class="bu">•</span> 180 KB</div><div class="dots"><b style="left:0"></b><b style="left:3.4px"></b><b style="left:6.8px"></b></div></div>
<div class="card" style="left:230px;top:745px"><svg class="abs" style="left:0;top:0" width="168" height="122" viewBox="0 0 168 122"><defs><linearGradient id="cg1" x1="0" y1="0" x2="1" y2="1"><stop offset="0" stop-color="#ffffff"/><stop offset="1" stop-color="#e9e9e9"/></linearGradient></defs><rect x="49.2" y="17" width="70.3" height="93" fill="#000" opacity=".12"/><rect x="48.7" y="16" width="70.3" height="93" fill="url(#cg1)" stroke="#c4c4c4" stroke-width=".8"/><text x="62.5" y="98.5" font-family="Liberation Serif, serif" font-size="100" fill="#a9c9ef">a</text><path d="M56.0 47.5 H109.0" stroke="#444" stroke-width=".9" stroke-dasharray="3 .7 5 .6 2 .7 6 .8" opacity=".8"/><path d="M56.0 52.9 H111.0" stroke="#444" stroke-width=".9" stroke-dasharray="3 .7 5 .6 2 .7 6 .8" opacity=".8"/><path d="M57.5 58.3 H111.0" stroke="#444" stroke-width=".9" stroke-dasharray="3 .7 5 .6 2 .7 6 .8" opacity=".8"/><path d="M56.0 63.7 H111.0" stroke="#444" stroke-width=".9" stroke-dasharray="3 .7 5 .6 2 .7 6 .8" opacity=".8"/><path d="M56.0 69.1 H109.0" stroke="#444" stroke-width=".9" stroke-dasharray="3 .7 5 .6 2 .7 6 .8" opacity=".8"/><path d="M56.0 74.5 H111.0" stroke="#444" stroke-width=".9" stroke-dasharray="3 .7 5 .6 2 .7 6 .8" opacity=".8"/><path d="M56.0 79.9 H111.0" stroke="#444" stroke-width=".9" stroke-dasharray="3 .7 5 .6 2 .7 6 .8" opacity=".8"/><path d="M56.0 85.3 H111.0" stroke="#444" stroke-width=".9" stroke-dasharray="3 .7 5 .6 2 .7 6 .8" opacity=".8"/><path d="M56.0 90.7 H109.0" stroke="#444" stroke-width=".9" stroke-dasharray="3 .7 5 .6 2 .7 6 .8" opacity=".8"/><path d="M56.0 96.1 H111.0" stroke="#444" stroke-width=".9" stroke-dasharray="3 .7 5 .6 2 .7 6 .8" opacity=".8"/><path d="M56.0 101.5 H111.0" stroke="#444" stroke-width=".9" stroke-dasharray="3 .7 5 .6 2 .7 6 .8" opacity=".8"/><rect x="36" y="21" width="66" height="23" fill="#5b9ce6"/><text x="42.8" y="40" font-family="Liberation Sans, sans-serif" font-weight="bold" font-size="20.5" fill="#fff" textLength="53.7" lengthAdjust="spacingAndGlyphs">DOCX</text></svg><div class="ti">Word document.docx</div><div class="me">DOCX <span class="bu">•</span> 21 KB</div><div class="dots"><b style="left:0"></b><b style="left:3.4px"></b><b style="left:6.8px"></b></div></div>
<div class="card" style="left:430px;top:745px"><svg class="abs" style="left:-0.8px;top:-0.6px" width="168" height="122" viewBox="0 0 168 122"><path d="M50.5 31.5 H81.7 L85.3 37.6 H120.3 L123.2 42.4 H45.8 Z" fill="#4e4e4e"/><path d="M39.7 48.6 H129.8 L124.4 104.4 H45.4 Z" fill="#4e4e4e"/></svg><div class="ti">04. Management</div><div class="me" style="letter-spacing:0">4 files</div><div class="dots"><b style="left:0"></b><b style="left:3.4px"></b><b style="left:6.8px"></b></div></div>
<div class="card" style="left:630px;top:745px"><svg class="abs" style="left:-0.8px;top:-0.6px" width="168" height="122" viewBox="0 0 168 122"><path d="M50.5 31.5 H81.7 L85.3 37.6 H120.3 L123.2 42.4 H45.8 Z" fill="#4e4e4e"/><path d="M39.7 48.6 H129.8 L124.4 104.4 H45.4 Z" fill="#4e4e4e"/></svg><div class="ti">05. Logo</div><div class="me" style="letter-spacing:0">3 files</div><div class="dots"><b style="left:0"></b><b style="left:3.4px"></b><b style="left:6.8px"></b></div></div>
<div class="card" style="left:830px;top:745px"><svg class="abs" style="left:-0.8px;top:-0.6px" width="168" height="122" viewBox="0 0 168 122"><path d="M50.5 31.5 H81.7 L85.3 37.6 H120.3 L123.2 42.4 H45.8 Z" fill="#4e4e4e"/><path d="M39.7 48.6 H129.8 L124.4 104.4 H45.4 Z" fill="#4e4e4e"/></svg><div class="ti">Corporate Inc Annual Report</div><div class="me" style="letter-spacing:0">1 folder, 1 file</div><div class="dots"><b style="left:0"></b><b style="left:3.4px"></b><b style="left:6.8px"></b></div></div>
</div>
<div id="fade"></div>
<div id="status">26 items - sorted by modification date (descending)</div>
<div id="panel">
<svg class="abs" style="left:14px;top:12px" width="18" height="18" viewBox="0 0 18 18"><circle cx="9" cy="9.2" r="7.8" fill="#1f78c8"/><rect x="7.9" y="7.6" width="2.4" height="5.6" fill="#fff"/><rect x="6.9" y="7.6" width="2" height="1.3" fill="#fff"/><rect x="6.7" y="12.2" width="4.8" height="1.3" fill="#fff"/><circle cx="9" cy="5" r="1.45" fill="#fff"/></svg>
<div class="abs" style="left:39px;top:13px;font-size:16px;line-height:20px;color:#1f78c8;white-space:nowrap;-webkit-text-stroke:0.35px #1f78c8;letter-spacing:-0.03px">Folder info</div>
<svg class="abs" style="left:270px;top:16px" width="13" height="13" viewBox="0 0 13 13"><path d="M1.5 1.5 L11.5 11.5 M11.5 1.5 L1.5 11.5" stroke="#cfcfcf" stroke-width="1.3" fill="none"/></svg>
<div class="hl" style="top:45px"></div>
<svg class="abs" style="left:110px;top:56px" width="82" height="82" viewBox="0 0 82 82"><circle cx="40.5" cy="40.7" r="34.2" fill="none" stroke="#1e88e5" stroke-width="5"/><rect x="19" y="40" width="10" height="20" fill="#1e88e5"/><rect x="35" y="32.4" width="9.6" height="27.6" fill="#1e88e5"/><rect x="51.2" y="21.8" width="10" height="38.2" fill="#1e88e5"/></svg>
<div class="abs" style="left:79px;top:148px;font-size:11px;line-height:14px;color:#aaa;white-space:nowrap;letter-spacing:-0.06px">Notice: Custom thumbnail</div>
<svg class="abs" style="left:209px;top:148px" width="12" height="12" viewBox="0 0 12 12"><path d="M1.5 2.6 H10.5 M4.3 2.4 V1.2 H7.7 V2.4" stroke="#666" stroke-width="1.1" fill="none"/><path d="M2.6 3.8 H9.4 L8.8 11 H3.2 Z" fill="#666"/><path d="M4.6 4.6 V10 M6 4.6 V10 M7.4 4.6 V10" stroke="#fff" stroke-width=".7"/></svg>
<div class="abs" style="left:79px;top:165px;font-size:12px;line-height:14px;color:#333;white-space:nowrap;letter-spacing:-0.11px"><b>Modified</b> 7 Oct 2018 19:05</div>
<div class="hl" style="top:192px"></div>
<div class="lb" style="top:209px">Name</div>
<div class="vl" style="top:228px">CORPORATE – sample folder</div>
<svg class="pen" style="top:227px" viewBox="0 0 14 14"><path d="M2.2 9.6 L9.4 2.4 L11.6 4.6 L4.4 11.8 L1.6 12.4 Z M8.2 3.6 L10.4 5.8" fill="none" stroke="#a8a8a8" stroke-width="1.1" stroke-linejoin="round"/><path d="M9.9 1.9 L10.7 1.1 Q11.2 .7 11.7 1.1 L12.9 2.3 Q13.3 2.8 12.9 3.3 L12.1 4.1" fill="none" stroke="#a8a8a8" stroke-width="1.1"/></svg>
<div class="lb" style="top:263px">Description</div>
<div class="vl" style="top:282px;white-space:normal;width:265px;letter-spacing:-0.03px">Here you can find and download images of our<br>oil rigs, harbors, fleet, management team, and<br>logos.</div>
<svg class="pen" style="top:281px" viewBox="0 0 14 14"><path d="M2.2 9.6 L9.4 2.4 L11.6 4.6 L4.4 11.8 L1.6 12.4 Z M8.2 3.6 L10.4 5.8" fill="none" stroke="#a8a8a8" stroke-width="1.1" stroke-linejoin="round"/><path d="M9.9 1.9 L10.7 1.1 Q11.2 .7 11.7 1.1 L12.9 2.3 Q13.3 2.8 12.9 3.3 L12.1 4.1" fill="none" stroke="#a8a8a8" stroke-width="1.1"/></svg>
<div class="hl" style="top:333px"></div>
<div class="abs" style="left:15px;top:343px;font-size:14px;line-height:18px;color:#1f78c8;white-space:nowrap;-webkit-text-stroke:0.3px #1f78c8;letter-spacing:0.07px">Advanced settings</div>
<svg class="abs" style="left:270px;top:345px" width="16" height="12" viewBox="0 0 16 12"><path d="M2 2.5 L8 8.8 L14 2.5" fill="none" stroke="#1f78c8" stroke-width="2"/></svg>
<div class="lb" style="top:381px">Theme</div>
<div class="vl" style="top:400px;letter-spacing:-0.32px">CORPORATE | sample theme</div>
<svg class="pen" style="top:399px" viewBox="0 0 14 14"><path d="M2.2 9.6 L9.4 2.4 L11.6 4.6 L4.4 11.8 L1.6 12.4 Z M8.2 3.6 L10.4 5.8" fill="none" stroke="#a8a8a8" stroke-width="1.1" stroke-linejoin="round"/><path d="M9.9 1.9 L10.7 1.1 Q11.2 .7 11.7 1.1 L12.9 2.3 Q13.3 2.8 12.9 3.3 L12.1 4.1" fill="none" stroke="#a8a8a8" stroke-width="1.1"/></svg>
<div class="lb" style="top:435px">Labelset</div>
<div class="vl g" style="letter-spacing:0;top:454px">Default (inherited)</div>
<svg class="pen" style="top:453px" viewBox="0 0 14 14"><path d="M2.2 9.6 L9.4 2.4 L11.6 4.6 L4.4 11.8 L1.6 12.4 Z M8.2 3.6 L10.4 5.8" fill="none" stroke="#a8a8a8" stroke-width="1.1" stroke-linejoin="round"/><path d="M9.9 1.9 L10.7 1.1 Q11.2 .7 11.7 1.1 L12.9 2.3 Q13.3 2.8 12.9 3.3 L12.1 4.1" fill="none" stroke="#a8a8a8" stroke-width="1.1"/></svg>
<div class="lb" style="top:489px">Label change</div>
<div class="vl" style="top:508px">Enabled</div>
<svg class="pen" style="top:507px" viewBox="0 0 14 14"><path d="M2.2 9.6 L9.4 2.4 L11.6 4.6 L4.4 11.8 L1.6 12.4 Z M8.2 3.6 L10.4 5.8" fill="none" stroke="#a8a8a8" stroke-width="1.1" stroke-linejoin="round"/><path d="M9.9 1.9 L10.7 1.1 Q11.2 .7 11.7 1.1 L12.9 2.3 Q13.3 2.8 12.9 3.3 L12.1 4.1" fill="none" stroke="#a8a8a8" stroke-width="1.1"/></svg>
<div class="lb" style="top:543px">Commenting</div>
<div class="vl" style="top:562px">Enabled</div>
<svg class="pen" style="top:561px" viewBox="0 0 14 14"><path d="M2.2 9.6 L9.4 2.4 L11.6 4.6 L4.4 11.8 L1.6 12.4 Z M8.2 3.6 L10.4 5.8" fill="none" stroke="#a8a8a8" stroke-width="1.1" stroke-linejoin="round"/><path d="M9.9 1.9 L10.7 1.1 Q11.2 .7 11.7 1.1 L12.9 2.3 Q13.3 2.8 12.9 3.3 L12.1 4.1" fill="none" stroke="#a8a8a8" stroke-width="1.1"/></svg>
<div class="hl" style="top:591px"></div>
<div class="lb" style="top:608px">Sort by</div>
<div class="vl g" style="letter-spacing:0;top:627px">Default (inherited)</div>
<svg class="pen" style="top:626px" viewBox="0 0 14 14"><path d="M2.2 9.6 L9.4 2.4 L11.6 4.6 L4.4 11.8 L1.6 12.4 Z M8.2 3.6 L10.4 5.8" fill="none" stroke="#a8a8a8" stroke-width="1.1" stroke-linejoin="round"/><path d="M9.9 1.9 L10.7 1.1 Q11.2 .7 11.7 1.1 L12.9 2.3 Q13.3 2.8 12.9 3.3 L12.1 4.1" fill="none" stroke="#a8a8a8" stroke-width="1.1"/></svg>
<div class="lb" style="top:662px">View</div>
<div class="vl g" style="letter-spacing:0;top:681px">Default (inherited)</div>
<svg class="pen" style="top:680px" viewBox="0 0 14 14"><path d="M2.2 9.6 L9.4 2.4 L11.6 4.6 L4.4 11.8 L1.6 12.4 Z M8.2 3.6 L10.4 5.8" fill="none" stroke="#a8a8a8" stroke-width="1.1" stroke-linejoin="round"/><path d="M9.9 1.9 L10.7 1.1 Q11.2 .7 11.7 1.1 L12.9 2.3 Q13.3 2.8 12.9 3.3 L12.1 4.1" fill="none" stroke="#a8a8a8" stroke-width="1.1"/></svg>
<div class="lb" style="top:716px">Cover thumbnails</div>
<div class="vl" style="top:735px;letter-spacing:0.05px">No (packshots etc)</div>
<svg class="pen" style="top:734px" viewBox="0 0 14 14"><path d="M2.2 9.6 L9.4 2.4 L11.6 4.6 L4.4 11.8 L1.6 12.4 Z M8.2 3.6 L10.4 5.8" fill="none" stroke="#a8a8a8" stroke-width="1.1" stroke-linejoin="round"/><path d="M9.9 1.9 L10.7 1.1 Q11.2 .7 11.7 1.1 L12.9 2.3 Q13.3 2.8 12.9 3.3 L12.1 4.1" fill="none" stroke="#a8a8a8" stroke-width="1.1"/></svg>
</div>
<svg class="abs" style="left:0;top:0;pointer-events:none" width="1440" height="900" viewBox="0 0 1440 900"><polygon points="890,532 895.5,541.5 1130.8,430.6 1138.9,447.8 1154.4,413.3 1116.7,405.5 1125,421.5" fill="#f0502d"/></svg>
</body>
</html>
